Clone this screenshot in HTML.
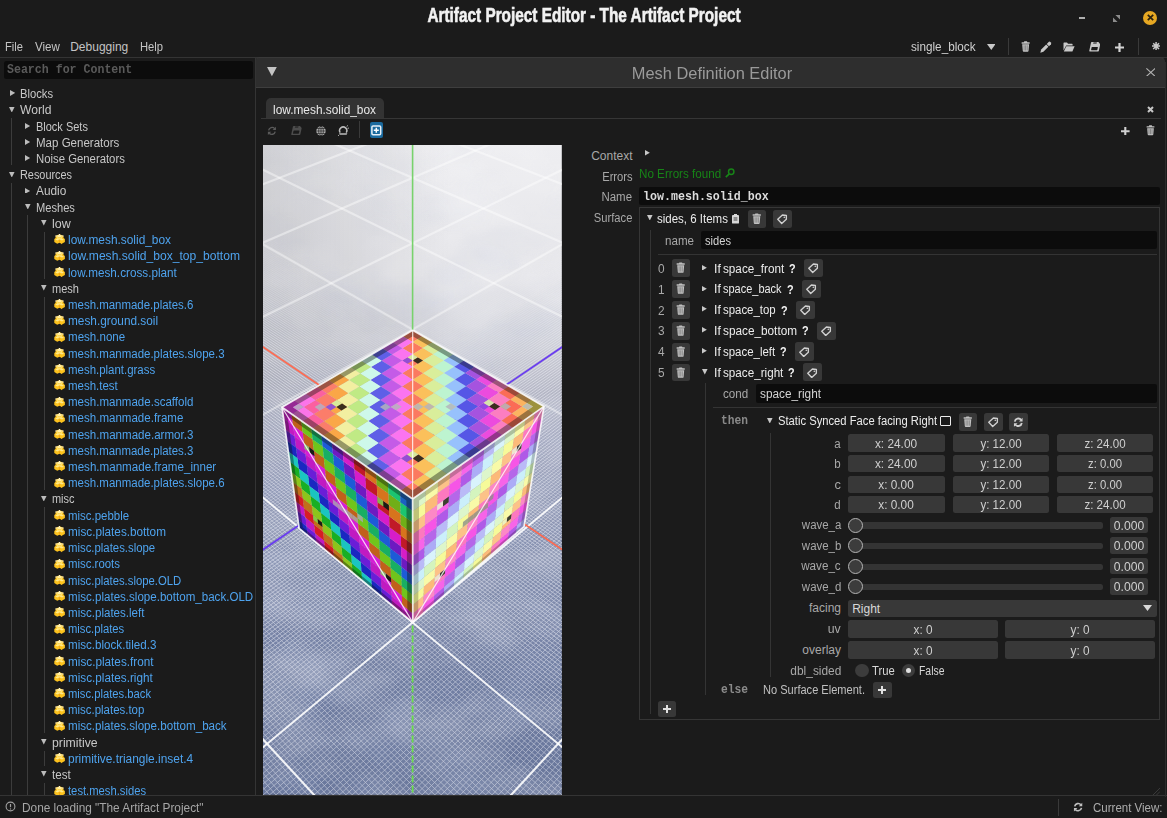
<!DOCTYPE html>
<html><head><meta charset="utf-8"><title>Artifact Project Editor</title>
<style>
html,body{margin:0;padding:0;background:#1b1b1b;}
#app{position:relative;width:1167px;height:818px;overflow:hidden;background:#1b1b1b;font-family:'Liberation Sans', sans-serif;}
#app div,#app svg,#app .t{position:absolute;}
#app div{box-sizing:border-box;}
.t{white-space:nowrap;}
#app .t span{position:static;}
</style></head><body>
<div id="app">
<div style="left:1079.2px;top:16.8px;width:6.0px;height:2.0px;background:#b0b0b0;"></div>
<svg style="left:1112.6px;top:14.8px;" width="7" height="7" viewBox="0 0 7 7"><path d="M2.4 0H7V4.6Z M0 2.4V7H4.6Z" fill="#8c8c8c"/></svg>
<div style="left:1142.8px;top:10.6px;width:14.4px;height:14.4px;background:#e6a823;border-radius:50%;"></div>
<svg style="left:1146.5px;top:14.3px;" width="7" height="7" viewBox="0 0 7 7"><path d="M0.8 0.8L6.2 6.2M6.2 0.8L0.8 6.2" stroke="#2a2110" stroke-width="1.7" fill="none"/></svg>
<svg style="left:986.8px;top:43.9px;" width="8.6" height="6" viewBox="0 0 8.6 6"><path d="M0 0H8.6L4.3 6Z" fill="#c8c8c8"/></svg>
<div style="left:1008.2px;top:38.0px;width:1.0px;height:16.5px;background:#3a3a3a;"></div>
<svg style="left:1020.8px;top:40.9px;" width="9.3" height="11.16" viewBox="0 0 10 12"><path d="M3.6 0.4h2.8l0.5 1H9.3v1.5H0.7V1.4H3.1z M1.3 3.5h7.4l-0.6 7.1q-0.1 0.9-1 0.9H2.9q-0.9 0-1-0.9z" fill="#c4c4c4"/><path d="M3.3 4.6v5.6M5 4.6v5.6M6.7 4.6v5.6" stroke="#1b1b1b" stroke-width="0.6" stroke-opacity="0.65" fill="none"/></svg>
<svg style="left:1040.0px;top:40.8px;" width="12" height="12" viewBox="0 0 12 12"><path d="M0.3 11.7L1.2 8.6L6.2 3.6L8.4 5.8L3.4 10.8Z" fill="#c8c8c8"/><path d="M6.8 3L8.6 0.9Q9.6 0.2 10.6 1.2T11 3.3L9 5.2Z" fill="#c8c8c8"/></svg>
<svg style="left:1063.0px;top:41.9px;" width="12" height="10" viewBox="0 0 12 10"><path d="M0.5 1.2q0-.6.6-.6H4l1 1.2H9q.6 0 .6.6V3.4H3.2L0.5 8.6Z" fill="#c8c8c8"/><path d="M3.3 4.3H11.6L9.4 9.4H0.8Z" fill="#c8c8c8"/></svg>
<svg style="left:1088.9px;top:41.3px;" width="11.399999999999999" height="11.399999999999999" viewBox="0 0 12 12"><g transform="skewX(-12) translate(1.6 0)"><path d="M1.5 1H8.6L11 3.4V10.4q0 .6-.6.6H1.5q-.6 0-.6-.6V1.6q0-.6.6-.6Z" fill="#c8c8c8"/><rect x="3.4" y="1" width="3.6" height="2.2" fill="#1b1b1b" fill-opacity="0.55"/><rect x="2.6" y="6.2" width="6.6" height="3.6" rx="0.5" fill="#1b1b1b"/></g></svg>
<svg style="left:1115.1px;top:42.8px;" width="9" height="9" viewBox="0 0 9 9"><path d="M4.5 0V9M0 4.5H9" stroke="#d4d4d4" stroke-width="2.2" fill="none"/></svg>
<div style="left:1138.0px;top:38.0px;width:1.0px;height:16.5px;background:#3a3a3a;"></div>
<svg style="left:1151.6px;top:42.0px;" width="8.2" height="8.2" viewBox="0 0 8.2 8.2"><path d="M4.1 0V8.2M0 4.1H8.2M1.2 1.2L7 7M7 1.2L1.2 7" stroke="#c8c8c8" stroke-width="1.5" fill="none"/></svg>
<div style="left:0.0px;top:57.3px;width:1167.0px;height:1.0px;background:#343434;"></div>
<div style="left:4.1px;top:61.0px;width:248.5px;height:17.5px;background:#0c0c0c;border-radius:2.5px;"></div>
<div style="left:255.0px;top:57.4px;width:1.3px;height:738.0px;background:#343434;"></div>
<svg style="left:9.6px;top:90.3px;" width="5.13" height="5.89" viewBox="0 0 5.13 5.89"><path d="M0 0L5.13 2.945L0 5.89Z" fill="#bcbcbc"/></svg>
<svg style="left:9.4px;top:106.6px;" width="5.58" height="5.58" viewBox="0 0 5.58 5.58"><path d="M0 0L5.58 0L2.79 5.58Z" fill="#bcbcbc"/></svg>
<svg style="left:25.4px;top:122.7px;" width="5.13" height="5.89" viewBox="0 0 5.13 5.89"><path d="M0 0L5.13 2.945L0 5.89Z" fill="#bcbcbc"/></svg>
<svg style="left:25.4px;top:138.9px;" width="5.13" height="5.89" viewBox="0 0 5.13 5.89"><path d="M0 0L5.13 2.945L0 5.89Z" fill="#bcbcbc"/></svg>
<svg style="left:25.4px;top:155.1px;" width="5.13" height="5.89" viewBox="0 0 5.13 5.89"><path d="M0 0L5.13 2.945L0 5.89Z" fill="#bcbcbc"/></svg>
<svg style="left:9.4px;top:171.5px;" width="5.58" height="5.58" viewBox="0 0 5.58 5.58"><path d="M0 0L5.58 0L2.79 5.58Z" fill="#bcbcbc"/></svg>
<svg style="left:25.4px;top:187.5px;" width="5.13" height="5.89" viewBox="0 0 5.13 5.89"><path d="M0 0L5.13 2.945L0 5.89Z" fill="#bcbcbc"/></svg>
<svg style="left:25.2px;top:203.9px;" width="5.58" height="5.58" viewBox="0 0 5.58 5.58"><path d="M0 0L5.58 0L2.79 5.58Z" fill="#bcbcbc"/></svg>
<svg style="left:41.1px;top:220.1px;" width="5.58" height="5.58" viewBox="0 0 5.58 5.58"><path d="M0 0L5.58 0L2.79 5.58Z" fill="#bcbcbc"/></svg>
<svg style="left:53.8px;top:234.3px;" width="11.2" height="10.4" viewBox="0 0 11.2 10.4"><path d="M5.5 0.2L9.4 1.7L9.6 3.9L10.9 4.9V8L8.2 9.6L7.6 10.2L7 9.4L5.5 8.7L3.2 9.7L0.3 8.1V4.9L1.5 3.9L1.6 1.7Z" fill="#fcc21e"/><path d="M5.5 0.5L9 1.9L5.5 3.6L2 1.9Z" fill="#fff0a8"/><path d="M2.6 2.6L5.5 4V6.2L3 5.2Z M8.4 2.6L5.5 4V6.2L8 5.2Z" fill="#ffe270"/><path d="M1.2 5.3L3.2 4.7L5.2 5.6L3.2 6.6Z M5.9 5.6L8 4.7L10 5.4L8 6.6Z" fill="#ffe88c"/><circle cx="2" cy="1.9" r="0.55" fill="#fff"/><circle cx="9" cy="1.9" r="0.55" fill="#fff"/><circle cx="5.5" cy="0.6" r="0.5" fill="#fff"/><path d="M5.5 5.6V8.6" stroke="#f09a10" stroke-width="0.7"/></svg>
<svg style="left:53.8px;top:250.5px;" width="11.2" height="10.4" viewBox="0 0 11.2 10.4"><path d="M5.5 0.2L9.4 1.7L9.6 3.9L10.9 4.9V8L8.2 9.6L7.6 10.2L7 9.4L5.5 8.7L3.2 9.7L0.3 8.1V4.9L1.5 3.9L1.6 1.7Z" fill="#fcc21e"/><path d="M5.5 0.5L9 1.9L5.5 3.6L2 1.9Z" fill="#fff0a8"/><path d="M2.6 2.6L5.5 4V6.2L3 5.2Z M8.4 2.6L5.5 4V6.2L8 5.2Z" fill="#ffe270"/><path d="M1.2 5.3L3.2 4.7L5.2 5.6L3.2 6.6Z M5.9 5.6L8 4.7L10 5.4L8 6.6Z" fill="#ffe88c"/><circle cx="2" cy="1.9" r="0.55" fill="#fff"/><circle cx="9" cy="1.9" r="0.55" fill="#fff"/><circle cx="5.5" cy="0.6" r="0.5" fill="#fff"/><path d="M5.5 5.6V8.6" stroke="#f09a10" stroke-width="0.7"/></svg>
<svg style="left:53.8px;top:266.8px;" width="11.2" height="10.4" viewBox="0 0 11.2 10.4"><path d="M5.5 0.2L9.4 1.7L9.6 3.9L10.9 4.9V8L8.2 9.6L7.6 10.2L7 9.4L5.5 8.7L3.2 9.7L0.3 8.1V4.9L1.5 3.9L1.6 1.7Z" fill="#fcc21e"/><path d="M5.5 0.5L9 1.9L5.5 3.6L2 1.9Z" fill="#fff0a8"/><path d="M2.6 2.6L5.5 4V6.2L3 5.2Z M8.4 2.6L5.5 4V6.2L8 5.2Z" fill="#ffe270"/><path d="M1.2 5.3L3.2 4.7L5.2 5.6L3.2 6.6Z M5.9 5.6L8 4.7L10 5.4L8 6.6Z" fill="#ffe88c"/><circle cx="2" cy="1.9" r="0.55" fill="#fff"/><circle cx="9" cy="1.9" r="0.55" fill="#fff"/><circle cx="5.5" cy="0.6" r="0.5" fill="#fff"/><path d="M5.5 5.6V8.6" stroke="#f09a10" stroke-width="0.7"/></svg>
<svg style="left:41.1px;top:285.0px;" width="5.58" height="5.58" viewBox="0 0 5.58 5.58"><path d="M0 0L5.58 0L2.79 5.58Z" fill="#bcbcbc"/></svg>
<svg style="left:53.8px;top:299.2px;" width="11.2" height="10.4" viewBox="0 0 11.2 10.4"><path d="M5.5 0.2L9.4 1.7L9.6 3.9L10.9 4.9V8L8.2 9.6L7.6 10.2L7 9.4L5.5 8.7L3.2 9.7L0.3 8.1V4.9L1.5 3.9L1.6 1.7Z" fill="#fcc21e"/><path d="M5.5 0.5L9 1.9L5.5 3.6L2 1.9Z" fill="#fff0a8"/><path d="M2.6 2.6L5.5 4V6.2L3 5.2Z M8.4 2.6L5.5 4V6.2L8 5.2Z" fill="#ffe270"/><path d="M1.2 5.3L3.2 4.7L5.2 5.6L3.2 6.6Z M5.9 5.6L8 4.7L10 5.4L8 6.6Z" fill="#ffe88c"/><circle cx="2" cy="1.9" r="0.55" fill="#fff"/><circle cx="9" cy="1.9" r="0.55" fill="#fff"/><circle cx="5.5" cy="0.6" r="0.5" fill="#fff"/><path d="M5.5 5.6V8.6" stroke="#f09a10" stroke-width="0.7"/></svg>
<svg style="left:53.8px;top:315.4px;" width="11.2" height="10.4" viewBox="0 0 11.2 10.4"><path d="M5.5 0.2L9.4 1.7L9.6 3.9L10.9 4.9V8L8.2 9.6L7.6 10.2L7 9.4L5.5 8.7L3.2 9.7L0.3 8.1V4.9L1.5 3.9L1.6 1.7Z" fill="#fcc21e"/><path d="M5.5 0.5L9 1.9L5.5 3.6L2 1.9Z" fill="#fff0a8"/><path d="M2.6 2.6L5.5 4V6.2L3 5.2Z M8.4 2.6L5.5 4V6.2L8 5.2Z" fill="#ffe270"/><path d="M1.2 5.3L3.2 4.7L5.2 5.6L3.2 6.6Z M5.9 5.6L8 4.7L10 5.4L8 6.6Z" fill="#ffe88c"/><circle cx="2" cy="1.9" r="0.55" fill="#fff"/><circle cx="9" cy="1.9" r="0.55" fill="#fff"/><circle cx="5.5" cy="0.6" r="0.5" fill="#fff"/><path d="M5.5 5.6V8.6" stroke="#f09a10" stroke-width="0.7"/></svg>
<svg style="left:53.8px;top:331.6px;" width="11.2" height="10.4" viewBox="0 0 11.2 10.4"><path d="M5.5 0.2L9.4 1.7L9.6 3.9L10.9 4.9V8L8.2 9.6L7.6 10.2L7 9.4L5.5 8.7L3.2 9.7L0.3 8.1V4.9L1.5 3.9L1.6 1.7Z" fill="#fcc21e"/><path d="M5.5 0.5L9 1.9L5.5 3.6L2 1.9Z" fill="#fff0a8"/><path d="M2.6 2.6L5.5 4V6.2L3 5.2Z M8.4 2.6L5.5 4V6.2L8 5.2Z" fill="#ffe270"/><path d="M1.2 5.3L3.2 4.7L5.2 5.6L3.2 6.6Z M5.9 5.6L8 4.7L10 5.4L8 6.6Z" fill="#ffe88c"/><circle cx="2" cy="1.9" r="0.55" fill="#fff"/><circle cx="9" cy="1.9" r="0.55" fill="#fff"/><circle cx="5.5" cy="0.6" r="0.5" fill="#fff"/><path d="M5.5 5.6V8.6" stroke="#f09a10" stroke-width="0.7"/></svg>
<svg style="left:53.8px;top:347.8px;" width="11.2" height="10.4" viewBox="0 0 11.2 10.4"><path d="M5.5 0.2L9.4 1.7L9.6 3.9L10.9 4.9V8L8.2 9.6L7.6 10.2L7 9.4L5.5 8.7L3.2 9.7L0.3 8.1V4.9L1.5 3.9L1.6 1.7Z" fill="#fcc21e"/><path d="M5.5 0.5L9 1.9L5.5 3.6L2 1.9Z" fill="#fff0a8"/><path d="M2.6 2.6L5.5 4V6.2L3 5.2Z M8.4 2.6L5.5 4V6.2L8 5.2Z" fill="#ffe270"/><path d="M1.2 5.3L3.2 4.7L5.2 5.6L3.2 6.6Z M5.9 5.6L8 4.7L10 5.4L8 6.6Z" fill="#ffe88c"/><circle cx="2" cy="1.9" r="0.55" fill="#fff"/><circle cx="9" cy="1.9" r="0.55" fill="#fff"/><circle cx="5.5" cy="0.6" r="0.5" fill="#fff"/><path d="M5.5 5.6V8.6" stroke="#f09a10" stroke-width="0.7"/></svg>
<svg style="left:53.8px;top:364.0px;" width="11.2" height="10.4" viewBox="0 0 11.2 10.4"><path d="M5.5 0.2L9.4 1.7L9.6 3.9L10.9 4.9V8L8.2 9.6L7.6 10.2L7 9.4L5.5 8.7L3.2 9.7L0.3 8.1V4.9L1.5 3.9L1.6 1.7Z" fill="#fcc21e"/><path d="M5.5 0.5L9 1.9L5.5 3.6L2 1.9Z" fill="#fff0a8"/><path d="M2.6 2.6L5.5 4V6.2L3 5.2Z M8.4 2.6L5.5 4V6.2L8 5.2Z" fill="#ffe270"/><path d="M1.2 5.3L3.2 4.7L5.2 5.6L3.2 6.6Z M5.9 5.6L8 4.7L10 5.4L8 6.6Z" fill="#ffe88c"/><circle cx="2" cy="1.9" r="0.55" fill="#fff"/><circle cx="9" cy="1.9" r="0.55" fill="#fff"/><circle cx="5.5" cy="0.6" r="0.5" fill="#fff"/><path d="M5.5 5.6V8.6" stroke="#f09a10" stroke-width="0.7"/></svg>
<svg style="left:53.8px;top:380.3px;" width="11.2" height="10.4" viewBox="0 0 11.2 10.4"><path d="M5.5 0.2L9.4 1.7L9.6 3.9L10.9 4.9V8L8.2 9.6L7.6 10.2L7 9.4L5.5 8.7L3.2 9.7L0.3 8.1V4.9L1.5 3.9L1.6 1.7Z" fill="#fcc21e"/><path d="M5.5 0.5L9 1.9L5.5 3.6L2 1.9Z" fill="#fff0a8"/><path d="M2.6 2.6L5.5 4V6.2L3 5.2Z M8.4 2.6L5.5 4V6.2L8 5.2Z" fill="#ffe270"/><path d="M1.2 5.3L3.2 4.7L5.2 5.6L3.2 6.6Z M5.9 5.6L8 4.7L10 5.4L8 6.6Z" fill="#ffe88c"/><circle cx="2" cy="1.9" r="0.55" fill="#fff"/><circle cx="9" cy="1.9" r="0.55" fill="#fff"/><circle cx="5.5" cy="0.6" r="0.5" fill="#fff"/><path d="M5.5 5.6V8.6" stroke="#f09a10" stroke-width="0.7"/></svg>
<svg style="left:53.8px;top:396.5px;" width="11.2" height="10.4" viewBox="0 0 11.2 10.4"><path d="M5.5 0.2L9.4 1.7L9.6 3.9L10.9 4.9V8L8.2 9.6L7.6 10.2L7 9.4L5.5 8.7L3.2 9.7L0.3 8.1V4.9L1.5 3.9L1.6 1.7Z" fill="#fcc21e"/><path d="M5.5 0.5L9 1.9L5.5 3.6L2 1.9Z" fill="#fff0a8"/><path d="M2.6 2.6L5.5 4V6.2L3 5.2Z M8.4 2.6L5.5 4V6.2L8 5.2Z" fill="#ffe270"/><path d="M1.2 5.3L3.2 4.7L5.2 5.6L3.2 6.6Z M5.9 5.6L8 4.7L10 5.4L8 6.6Z" fill="#ffe88c"/><circle cx="2" cy="1.9" r="0.55" fill="#fff"/><circle cx="9" cy="1.9" r="0.55" fill="#fff"/><circle cx="5.5" cy="0.6" r="0.5" fill="#fff"/><path d="M5.5 5.6V8.6" stroke="#f09a10" stroke-width="0.7"/></svg>
<svg style="left:53.8px;top:412.7px;" width="11.2" height="10.4" viewBox="0 0 11.2 10.4"><path d="M5.5 0.2L9.4 1.7L9.6 3.9L10.9 4.9V8L8.2 9.6L7.6 10.2L7 9.4L5.5 8.7L3.2 9.7L0.3 8.1V4.9L1.5 3.9L1.6 1.7Z" fill="#fcc21e"/><path d="M5.5 0.5L9 1.9L5.5 3.6L2 1.9Z" fill="#fff0a8"/><path d="M2.6 2.6L5.5 4V6.2L3 5.2Z M8.4 2.6L5.5 4V6.2L8 5.2Z" fill="#ffe270"/><path d="M1.2 5.3L3.2 4.7L5.2 5.6L3.2 6.6Z M5.9 5.6L8 4.7L10 5.4L8 6.6Z" fill="#ffe88c"/><circle cx="2" cy="1.9" r="0.55" fill="#fff"/><circle cx="9" cy="1.9" r="0.55" fill="#fff"/><circle cx="5.5" cy="0.6" r="0.5" fill="#fff"/><path d="M5.5 5.6V8.6" stroke="#f09a10" stroke-width="0.7"/></svg>
<svg style="left:53.8px;top:428.9px;" width="11.2" height="10.4" viewBox="0 0 11.2 10.4"><path d="M5.5 0.2L9.4 1.7L9.6 3.9L10.9 4.9V8L8.2 9.6L7.6 10.2L7 9.4L5.5 8.7L3.2 9.7L0.3 8.1V4.9L1.5 3.9L1.6 1.7Z" fill="#fcc21e"/><path d="M5.5 0.5L9 1.9L5.5 3.6L2 1.9Z" fill="#fff0a8"/><path d="M2.6 2.6L5.5 4V6.2L3 5.2Z M8.4 2.6L5.5 4V6.2L8 5.2Z" fill="#ffe270"/><path d="M1.2 5.3L3.2 4.7L5.2 5.6L3.2 6.6Z M5.9 5.6L8 4.7L10 5.4L8 6.6Z" fill="#ffe88c"/><circle cx="2" cy="1.9" r="0.55" fill="#fff"/><circle cx="9" cy="1.9" r="0.55" fill="#fff"/><circle cx="5.5" cy="0.6" r="0.5" fill="#fff"/><path d="M5.5 5.6V8.6" stroke="#f09a10" stroke-width="0.7"/></svg>
<svg style="left:53.8px;top:445.1px;" width="11.2" height="10.4" viewBox="0 0 11.2 10.4"><path d="M5.5 0.2L9.4 1.7L9.6 3.9L10.9 4.9V8L8.2 9.6L7.6 10.2L7 9.4L5.5 8.7L3.2 9.7L0.3 8.1V4.9L1.5 3.9L1.6 1.7Z" fill="#fcc21e"/><path d="M5.5 0.5L9 1.9L5.5 3.6L2 1.9Z" fill="#fff0a8"/><path d="M2.6 2.6L5.5 4V6.2L3 5.2Z M8.4 2.6L5.5 4V6.2L8 5.2Z" fill="#ffe270"/><path d="M1.2 5.3L3.2 4.7L5.2 5.6L3.2 6.6Z M5.9 5.6L8 4.7L10 5.4L8 6.6Z" fill="#ffe88c"/><circle cx="2" cy="1.9" r="0.55" fill="#fff"/><circle cx="9" cy="1.9" r="0.55" fill="#fff"/><circle cx="5.5" cy="0.6" r="0.5" fill="#fff"/><path d="M5.5 5.6V8.6" stroke="#f09a10" stroke-width="0.7"/></svg>
<svg style="left:53.8px;top:461.3px;" width="11.2" height="10.4" viewBox="0 0 11.2 10.4"><path d="M5.5 0.2L9.4 1.7L9.6 3.9L10.9 4.9V8L8.2 9.6L7.6 10.2L7 9.4L5.5 8.7L3.2 9.7L0.3 8.1V4.9L1.5 3.9L1.6 1.7Z" fill="#fcc21e"/><path d="M5.5 0.5L9 1.9L5.5 3.6L2 1.9Z" fill="#fff0a8"/><path d="M2.6 2.6L5.5 4V6.2L3 5.2Z M8.4 2.6L5.5 4V6.2L8 5.2Z" fill="#ffe270"/><path d="M1.2 5.3L3.2 4.7L5.2 5.6L3.2 6.6Z M5.9 5.6L8 4.7L10 5.4L8 6.6Z" fill="#ffe88c"/><circle cx="2" cy="1.9" r="0.55" fill="#fff"/><circle cx="9" cy="1.9" r="0.55" fill="#fff"/><circle cx="5.5" cy="0.6" r="0.5" fill="#fff"/><path d="M5.5 5.6V8.6" stroke="#f09a10" stroke-width="0.7"/></svg>
<svg style="left:53.8px;top:477.5px;" width="11.2" height="10.4" viewBox="0 0 11.2 10.4"><path d="M5.5 0.2L9.4 1.7L9.6 3.9L10.9 4.9V8L8.2 9.6L7.6 10.2L7 9.4L5.5 8.7L3.2 9.7L0.3 8.1V4.9L1.5 3.9L1.6 1.7Z" fill="#fcc21e"/><path d="M5.5 0.5L9 1.9L5.5 3.6L2 1.9Z" fill="#fff0a8"/><path d="M2.6 2.6L5.5 4V6.2L3 5.2Z M8.4 2.6L5.5 4V6.2L8 5.2Z" fill="#ffe270"/><path d="M1.2 5.3L3.2 4.7L5.2 5.6L3.2 6.6Z M5.9 5.6L8 4.7L10 5.4L8 6.6Z" fill="#ffe88c"/><circle cx="2" cy="1.9" r="0.55" fill="#fff"/><circle cx="9" cy="1.9" r="0.55" fill="#fff"/><circle cx="5.5" cy="0.6" r="0.5" fill="#fff"/><path d="M5.5 5.6V8.6" stroke="#f09a10" stroke-width="0.7"/></svg>
<svg style="left:41.1px;top:495.8px;" width="5.58" height="5.58" viewBox="0 0 5.58 5.58"><path d="M0 0L5.58 0L2.79 5.58Z" fill="#bcbcbc"/></svg>
<svg style="left:53.8px;top:510.0px;" width="11.2" height="10.4" viewBox="0 0 11.2 10.4"><path d="M5.5 0.2L9.4 1.7L9.6 3.9L10.9 4.9V8L8.2 9.6L7.6 10.2L7 9.4L5.5 8.7L3.2 9.7L0.3 8.1V4.9L1.5 3.9L1.6 1.7Z" fill="#fcc21e"/><path d="M5.5 0.5L9 1.9L5.5 3.6L2 1.9Z" fill="#fff0a8"/><path d="M2.6 2.6L5.5 4V6.2L3 5.2Z M8.4 2.6L5.5 4V6.2L8 5.2Z" fill="#ffe270"/><path d="M1.2 5.3L3.2 4.7L5.2 5.6L3.2 6.6Z M5.9 5.6L8 4.7L10 5.4L8 6.6Z" fill="#ffe88c"/><circle cx="2" cy="1.9" r="0.55" fill="#fff"/><circle cx="9" cy="1.9" r="0.55" fill="#fff"/><circle cx="5.5" cy="0.6" r="0.5" fill="#fff"/><path d="M5.5 5.6V8.6" stroke="#f09a10" stroke-width="0.7"/></svg>
<svg style="left:53.8px;top:526.2px;" width="11.2" height="10.4" viewBox="0 0 11.2 10.4"><path d="M5.5 0.2L9.4 1.7L9.6 3.9L10.9 4.9V8L8.2 9.6L7.6 10.2L7 9.4L5.5 8.7L3.2 9.7L0.3 8.1V4.9L1.5 3.9L1.6 1.7Z" fill="#fcc21e"/><path d="M5.5 0.5L9 1.9L5.5 3.6L2 1.9Z" fill="#fff0a8"/><path d="M2.6 2.6L5.5 4V6.2L3 5.2Z M8.4 2.6L5.5 4V6.2L8 5.2Z" fill="#ffe270"/><path d="M1.2 5.3L3.2 4.7L5.2 5.6L3.2 6.6Z M5.9 5.6L8 4.7L10 5.4L8 6.6Z" fill="#ffe88c"/><circle cx="2" cy="1.9" r="0.55" fill="#fff"/><circle cx="9" cy="1.9" r="0.55" fill="#fff"/><circle cx="5.5" cy="0.6" r="0.5" fill="#fff"/><path d="M5.5 5.6V8.6" stroke="#f09a10" stroke-width="0.7"/></svg>
<svg style="left:53.8px;top:542.4px;" width="11.2" height="10.4" viewBox="0 0 11.2 10.4"><path d="M5.5 0.2L9.4 1.7L9.6 3.9L10.9 4.9V8L8.2 9.6L7.6 10.2L7 9.4L5.5 8.7L3.2 9.7L0.3 8.1V4.9L1.5 3.9L1.6 1.7Z" fill="#fcc21e"/><path d="M5.5 0.5L9 1.9L5.5 3.6L2 1.9Z" fill="#fff0a8"/><path d="M2.6 2.6L5.5 4V6.2L3 5.2Z M8.4 2.6L5.5 4V6.2L8 5.2Z" fill="#ffe270"/><path d="M1.2 5.3L3.2 4.7L5.2 5.6L3.2 6.6Z M5.9 5.6L8 4.7L10 5.4L8 6.6Z" fill="#ffe88c"/><circle cx="2" cy="1.9" r="0.55" fill="#fff"/><circle cx="9" cy="1.9" r="0.55" fill="#fff"/><circle cx="5.5" cy="0.6" r="0.5" fill="#fff"/><path d="M5.5 5.6V8.6" stroke="#f09a10" stroke-width="0.7"/></svg>
<svg style="left:53.8px;top:558.6px;" width="11.2" height="10.4" viewBox="0 0 11.2 10.4"><path d="M5.5 0.2L9.4 1.7L9.6 3.9L10.9 4.9V8L8.2 9.6L7.6 10.2L7 9.4L5.5 8.7L3.2 9.7L0.3 8.1V4.9L1.5 3.9L1.6 1.7Z" fill="#fcc21e"/><path d="M5.5 0.5L9 1.9L5.5 3.6L2 1.9Z" fill="#fff0a8"/><path d="M2.6 2.6L5.5 4V6.2L3 5.2Z M8.4 2.6L5.5 4V6.2L8 5.2Z" fill="#ffe270"/><path d="M1.2 5.3L3.2 4.7L5.2 5.6L3.2 6.6Z M5.9 5.6L8 4.7L10 5.4L8 6.6Z" fill="#ffe88c"/><circle cx="2" cy="1.9" r="0.55" fill="#fff"/><circle cx="9" cy="1.9" r="0.55" fill="#fff"/><circle cx="5.5" cy="0.6" r="0.5" fill="#fff"/><path d="M5.5 5.6V8.6" stroke="#f09a10" stroke-width="0.7"/></svg>
<svg style="left:53.8px;top:574.8px;" width="11.2" height="10.4" viewBox="0 0 11.2 10.4"><path d="M5.5 0.2L9.4 1.7L9.6 3.9L10.9 4.9V8L8.2 9.6L7.6 10.2L7 9.4L5.5 8.7L3.2 9.7L0.3 8.1V4.9L1.5 3.9L1.6 1.7Z" fill="#fcc21e"/><path d="M5.5 0.5L9 1.9L5.5 3.6L2 1.9Z" fill="#fff0a8"/><path d="M2.6 2.6L5.5 4V6.2L3 5.2Z M8.4 2.6L5.5 4V6.2L8 5.2Z" fill="#ffe270"/><path d="M1.2 5.3L3.2 4.7L5.2 5.6L3.2 6.6Z M5.9 5.6L8 4.7L10 5.4L8 6.6Z" fill="#ffe88c"/><circle cx="2" cy="1.9" r="0.55" fill="#fff"/><circle cx="9" cy="1.9" r="0.55" fill="#fff"/><circle cx="5.5" cy="0.6" r="0.5" fill="#fff"/><path d="M5.5 5.6V8.6" stroke="#f09a10" stroke-width="0.7"/></svg>
<svg style="left:53.8px;top:591.0px;" width="11.2" height="10.4" viewBox="0 0 11.2 10.4"><path d="M5.5 0.2L9.4 1.7L9.6 3.9L10.9 4.9V8L8.2 9.6L7.6 10.2L7 9.4L5.5 8.7L3.2 9.7L0.3 8.1V4.9L1.5 3.9L1.6 1.7Z" fill="#fcc21e"/><path d="M5.5 0.5L9 1.9L5.5 3.6L2 1.9Z" fill="#fff0a8"/><path d="M2.6 2.6L5.5 4V6.2L3 5.2Z M8.4 2.6L5.5 4V6.2L8 5.2Z" fill="#ffe270"/><path d="M1.2 5.3L3.2 4.7L5.2 5.6L3.2 6.6Z M5.9 5.6L8 4.7L10 5.4L8 6.6Z" fill="#ffe88c"/><circle cx="2" cy="1.9" r="0.55" fill="#fff"/><circle cx="9" cy="1.9" r="0.55" fill="#fff"/><circle cx="5.5" cy="0.6" r="0.5" fill="#fff"/><path d="M5.5 5.6V8.6" stroke="#f09a10" stroke-width="0.7"/></svg>
<svg style="left:53.8px;top:607.2px;" width="11.2" height="10.4" viewBox="0 0 11.2 10.4"><path d="M5.5 0.2L9.4 1.7L9.6 3.9L10.9 4.9V8L8.2 9.6L7.6 10.2L7 9.4L5.5 8.7L3.2 9.7L0.3 8.1V4.9L1.5 3.9L1.6 1.7Z" fill="#fcc21e"/><path d="M5.5 0.5L9 1.9L5.5 3.6L2 1.9Z" fill="#fff0a8"/><path d="M2.6 2.6L5.5 4V6.2L3 5.2Z M8.4 2.6L5.5 4V6.2L8 5.2Z" fill="#ffe270"/><path d="M1.2 5.3L3.2 4.7L5.2 5.6L3.2 6.6Z M5.9 5.6L8 4.7L10 5.4L8 6.6Z" fill="#ffe88c"/><circle cx="2" cy="1.9" r="0.55" fill="#fff"/><circle cx="9" cy="1.9" r="0.55" fill="#fff"/><circle cx="5.5" cy="0.6" r="0.5" fill="#fff"/><path d="M5.5 5.6V8.6" stroke="#f09a10" stroke-width="0.7"/></svg>
<svg style="left:53.8px;top:623.5px;" width="11.2" height="10.4" viewBox="0 0 11.2 10.4"><path d="M5.5 0.2L9.4 1.7L9.6 3.9L10.9 4.9V8L8.2 9.6L7.6 10.2L7 9.4L5.5 8.7L3.2 9.7L0.3 8.1V4.9L1.5 3.9L1.6 1.7Z" fill="#fcc21e"/><path d="M5.5 0.5L9 1.9L5.5 3.6L2 1.9Z" fill="#fff0a8"/><path d="M2.6 2.6L5.5 4V6.2L3 5.2Z M8.4 2.6L5.5 4V6.2L8 5.2Z" fill="#ffe270"/><path d="M1.2 5.3L3.2 4.7L5.2 5.6L3.2 6.6Z M5.9 5.6L8 4.7L10 5.4L8 6.6Z" fill="#ffe88c"/><circle cx="2" cy="1.9" r="0.55" fill="#fff"/><circle cx="9" cy="1.9" r="0.55" fill="#fff"/><circle cx="5.5" cy="0.6" r="0.5" fill="#fff"/><path d="M5.5 5.6V8.6" stroke="#f09a10" stroke-width="0.7"/></svg>
<svg style="left:53.8px;top:639.7px;" width="11.2" height="10.4" viewBox="0 0 11.2 10.4"><path d="M5.5 0.2L9.4 1.7L9.6 3.9L10.9 4.9V8L8.2 9.6L7.6 10.2L7 9.4L5.5 8.7L3.2 9.7L0.3 8.1V4.9L1.5 3.9L1.6 1.7Z" fill="#fcc21e"/><path d="M5.5 0.5L9 1.9L5.5 3.6L2 1.9Z" fill="#fff0a8"/><path d="M2.6 2.6L5.5 4V6.2L3 5.2Z M8.4 2.6L5.5 4V6.2L8 5.2Z" fill="#ffe270"/><path d="M1.2 5.3L3.2 4.7L5.2 5.6L3.2 6.6Z M5.9 5.6L8 4.7L10 5.4L8 6.6Z" fill="#ffe88c"/><circle cx="2" cy="1.9" r="0.55" fill="#fff"/><circle cx="9" cy="1.9" r="0.55" fill="#fff"/><circle cx="5.5" cy="0.6" r="0.5" fill="#fff"/><path d="M5.5 5.6V8.6" stroke="#f09a10" stroke-width="0.7"/></svg>
<svg style="left:53.8px;top:655.9px;" width="11.2" height="10.4" viewBox="0 0 11.2 10.4"><path d="M5.5 0.2L9.4 1.7L9.6 3.9L10.9 4.9V8L8.2 9.6L7.6 10.2L7 9.4L5.5 8.7L3.2 9.7L0.3 8.1V4.9L1.5 3.9L1.6 1.7Z" fill="#fcc21e"/><path d="M5.5 0.5L9 1.9L5.5 3.6L2 1.9Z" fill="#fff0a8"/><path d="M2.6 2.6L5.5 4V6.2L3 5.2Z M8.4 2.6L5.5 4V6.2L8 5.2Z" fill="#ffe270"/><path d="M1.2 5.3L3.2 4.7L5.2 5.6L3.2 6.6Z M5.9 5.6L8 4.7L10 5.4L8 6.6Z" fill="#ffe88c"/><circle cx="2" cy="1.9" r="0.55" fill="#fff"/><circle cx="9" cy="1.9" r="0.55" fill="#fff"/><circle cx="5.5" cy="0.6" r="0.5" fill="#fff"/><path d="M5.5 5.6V8.6" stroke="#f09a10" stroke-width="0.7"/></svg>
<svg style="left:53.8px;top:672.1px;" width="11.2" height="10.4" viewBox="0 0 11.2 10.4"><path d="M5.5 0.2L9.4 1.7L9.6 3.9L10.9 4.9V8L8.2 9.6L7.6 10.2L7 9.4L5.5 8.7L3.2 9.7L0.3 8.1V4.9L1.5 3.9L1.6 1.7Z" fill="#fcc21e"/><path d="M5.5 0.5L9 1.9L5.5 3.6L2 1.9Z" fill="#fff0a8"/><path d="M2.6 2.6L5.5 4V6.2L3 5.2Z M8.4 2.6L5.5 4V6.2L8 5.2Z" fill="#ffe270"/><path d="M1.2 5.3L3.2 4.7L5.2 5.6L3.2 6.6Z M5.9 5.6L8 4.7L10 5.4L8 6.6Z" fill="#ffe88c"/><circle cx="2" cy="1.9" r="0.55" fill="#fff"/><circle cx="9" cy="1.9" r="0.55" fill="#fff"/><circle cx="5.5" cy="0.6" r="0.5" fill="#fff"/><path d="M5.5 5.6V8.6" stroke="#f09a10" stroke-width="0.7"/></svg>
<svg style="left:53.8px;top:688.3px;" width="11.2" height="10.4" viewBox="0 0 11.2 10.4"><path d="M5.5 0.2L9.4 1.7L9.6 3.9L10.9 4.9V8L8.2 9.6L7.6 10.2L7 9.4L5.5 8.7L3.2 9.7L0.3 8.1V4.9L1.5 3.9L1.6 1.7Z" fill="#fcc21e"/><path d="M5.5 0.5L9 1.9L5.5 3.6L2 1.9Z" fill="#fff0a8"/><path d="M2.6 2.6L5.5 4V6.2L3 5.2Z M8.4 2.6L5.5 4V6.2L8 5.2Z" fill="#ffe270"/><path d="M1.2 5.3L3.2 4.7L5.2 5.6L3.2 6.6Z M5.9 5.6L8 4.7L10 5.4L8 6.6Z" fill="#ffe88c"/><circle cx="2" cy="1.9" r="0.55" fill="#fff"/><circle cx="9" cy="1.9" r="0.55" fill="#fff"/><circle cx="5.5" cy="0.6" r="0.5" fill="#fff"/><path d="M5.5 5.6V8.6" stroke="#f09a10" stroke-width="0.7"/></svg>
<svg style="left:53.8px;top:704.5px;" width="11.2" height="10.4" viewBox="0 0 11.2 10.4"><path d="M5.5 0.2L9.4 1.7L9.6 3.9L10.9 4.9V8L8.2 9.6L7.6 10.2L7 9.4L5.5 8.7L3.2 9.7L0.3 8.1V4.9L1.5 3.9L1.6 1.7Z" fill="#fcc21e"/><path d="M5.5 0.5L9 1.9L5.5 3.6L2 1.9Z" fill="#fff0a8"/><path d="M2.6 2.6L5.5 4V6.2L3 5.2Z M8.4 2.6L5.5 4V6.2L8 5.2Z" fill="#ffe270"/><path d="M1.2 5.3L3.2 4.7L5.2 5.6L3.2 6.6Z M5.9 5.6L8 4.7L10 5.4L8 6.6Z" fill="#ffe88c"/><circle cx="2" cy="1.9" r="0.55" fill="#fff"/><circle cx="9" cy="1.9" r="0.55" fill="#fff"/><circle cx="5.5" cy="0.6" r="0.5" fill="#fff"/><path d="M5.5 5.6V8.6" stroke="#f09a10" stroke-width="0.7"/></svg>
<svg style="left:53.8px;top:720.7px;" width="11.2" height="10.4" viewBox="0 0 11.2 10.4"><path d="M5.5 0.2L9.4 1.7L9.6 3.9L10.9 4.9V8L8.2 9.6L7.6 10.2L7 9.4L5.5 8.7L3.2 9.7L0.3 8.1V4.9L1.5 3.9L1.6 1.7Z" fill="#fcc21e"/><path d="M5.5 0.5L9 1.9L5.5 3.6L2 1.9Z" fill="#fff0a8"/><path d="M2.6 2.6L5.5 4V6.2L3 5.2Z M8.4 2.6L5.5 4V6.2L8 5.2Z" fill="#ffe270"/><path d="M1.2 5.3L3.2 4.7L5.2 5.6L3.2 6.6Z M5.9 5.6L8 4.7L10 5.4L8 6.6Z" fill="#ffe88c"/><circle cx="2" cy="1.9" r="0.55" fill="#fff"/><circle cx="9" cy="1.9" r="0.55" fill="#fff"/><circle cx="5.5" cy="0.6" r="0.5" fill="#fff"/><path d="M5.5 5.6V8.6" stroke="#f09a10" stroke-width="0.7"/></svg>
<svg style="left:41.1px;top:739.0px;" width="5.58" height="5.58" viewBox="0 0 5.58 5.58"><path d="M0 0L5.58 0L2.79 5.58Z" fill="#bcbcbc"/></svg>
<svg style="left:53.8px;top:753.2px;" width="11.2" height="10.4" viewBox="0 0 11.2 10.4"><path d="M5.5 0.2L9.4 1.7L9.6 3.9L10.9 4.9V8L8.2 9.6L7.6 10.2L7 9.4L5.5 8.7L3.2 9.7L0.3 8.1V4.9L1.5 3.9L1.6 1.7Z" fill="#fcc21e"/><path d="M5.5 0.5L9 1.9L5.5 3.6L2 1.9Z" fill="#fff0a8"/><path d="M2.6 2.6L5.5 4V6.2L3 5.2Z M8.4 2.6L5.5 4V6.2L8 5.2Z" fill="#ffe270"/><path d="M1.2 5.3L3.2 4.7L5.2 5.6L3.2 6.6Z M5.9 5.6L8 4.7L10 5.4L8 6.6Z" fill="#ffe88c"/><circle cx="2" cy="1.9" r="0.55" fill="#fff"/><circle cx="9" cy="1.9" r="0.55" fill="#fff"/><circle cx="5.5" cy="0.6" r="0.5" fill="#fff"/><path d="M5.5 5.6V8.6" stroke="#f09a10" stroke-width="0.7"/></svg>
<svg style="left:41.1px;top:771.4px;" width="5.58" height="5.58" viewBox="0 0 5.58 5.58"><path d="M0 0L5.58 0L2.79 5.58Z" fill="#bcbcbc"/></svg>
<svg style="left:53.8px;top:785.6px;" width="11.2" height="10.4" viewBox="0 0 11.2 10.4"><path d="M5.5 0.2L9.4 1.7L9.6 3.9L10.9 4.9V8L8.2 9.6L7.6 10.2L7 9.4L5.5 8.7L3.2 9.7L0.3 8.1V4.9L1.5 3.9L1.6 1.7Z" fill="#fcc21e"/><path d="M5.5 0.5L9 1.9L5.5 3.6L2 1.9Z" fill="#fff0a8"/><path d="M2.6 2.6L5.5 4V6.2L3 5.2Z M8.4 2.6L5.5 4V6.2L8 5.2Z" fill="#ffe270"/><path d="M1.2 5.3L3.2 4.7L5.2 5.6L3.2 6.6Z M5.9 5.6L8 4.7L10 5.4L8 6.6Z" fill="#ffe88c"/><circle cx="2" cy="1.9" r="0.55" fill="#fff"/><circle cx="9" cy="1.9" r="0.55" fill="#fff"/><circle cx="5.5" cy="0.6" r="0.5" fill="#fff"/><path d="M5.5 5.6V8.6" stroke="#f09a10" stroke-width="0.7"/></svg>
<div style="left:10.9px;top:118.1px;width:1.0px;height:47.4px;background:#3c3c3c;"></div>
<div style="left:10.9px;top:183.0px;width:1.0px;height:631.1px;background:#3c3c3c;"></div>
<div style="left:27.0px;top:215.4px;width:1.0px;height:598.7px;background:#3c3c3c;"></div>
<div style="left:43.9px;top:231.6px;width:1.0px;height:47.4px;background:#3c3c3c;"></div>
<div style="left:43.9px;top:296.5px;width:1.0px;height:193.4px;background:#3c3c3c;"></div>
<div style="left:43.9px;top:507.3px;width:1.0px;height:225.8px;background:#3c3c3c;"></div>
<div style="left:43.9px;top:750.5px;width:1.0px;height:15.0px;background:#3c3c3c;"></div>
<div style="left:43.9px;top:782.9px;width:1.0px;height:15.0px;background:#3c3c3c;"></div>
<div style="left:0.0px;top:795.0px;width:1167.0px;height:23.0px;background:#1b1b1b;"></div>
<div style="left:0.0px;top:795.0px;width:1167.0px;height:1.0px;background:#343434;"></div>
<svg style="left:5.0px;top:801.2px;" width="11" height="11" viewBox="0 0 11 11"><circle cx="5.5" cy="5.5" r="4.4" fill="none" stroke="#a0a0a0" stroke-width="1.1"/><path d="M5.5 3V6.2" stroke="#a0a0a0" stroke-width="1.2"/><circle cx="5.5" cy="7.9" r="0.7" fill="#a0a0a0"/></svg>
<div style="left:1058.2px;top:799.0px;width:1.0px;height:17.0px;background:#3a3a3a;"></div>
<svg style="left:1072.6px;top:801.9px;" width="10.2" height="10.2" viewBox="0 0 12 12"><path d="M2 5.2A4.2 4.2 0 0 1 9.3 3.2" fill="none" stroke="#c0c0c0" stroke-width="1.9"/><path d="M10.9 0.9V5H6.8Z" fill="#c0c0c0"/><path d="M10 6.8A4.2 4.2 0 0 1 2.7 8.8" fill="none" stroke="#c0c0c0" stroke-width="1.9"/><path d="M1.1 11.1V7H5.2Z" fill="#c0c0c0"/></svg>
<div style="left:256.4px;top:57.4px;width:908.6px;height:30.4px;background:#2e2e2e;border-radius:3px 5px 0 0;border-top:1px solid #393939;"></div>
<div style="left:256.4px;top:86.9px;width:908.6px;height:1.0px;background:#3e3e3e;"></div>
<div style="left:1165.2px;top:62.0px;width:1.0px;height:735.0px;background:#2c2c2c;"></div>
<svg style="left:267.3px;top:67.4px;" width="9.8" height="9.2" viewBox="0 0 9.8 9.2"><path d="M0 0H9.8L4.9 9.2Z" fill="#c4c4c4"/></svg>
<svg style="left:1145.8px;top:67.6px;" width="9.6" height="8.8" viewBox="0 0 9.6 8.8"><path d="M0.4 0.4L9.2 8.4M9.2 0.4L0.4 8.4" stroke="#b4b4b4" stroke-width="1.1" fill="none"/></svg>
<div style="left:266.0px;top:98.0px;width:118.0px;height:20.4px;background:#333333;border-radius:5px 5px 0 0;"></div>
<div style="left:260.5px;top:118.0px;width:900.0px;height:1.0px;background:#363636;"></div>
<svg style="left:1147.2px;top:105.6px;" width="7" height="7" viewBox="0 0 7 7"><path d="M1 1L6 6M6 1L1 6" stroke="#c8c8c8" stroke-width="2" fill="none"/></svg>
<svg style="left:266.7px;top:125.7px;" width="9.84" height="9.84" viewBox="0 0 12 12"><path d="M2 5.2A4.2 4.2 0 0 1 9.3 3.2" fill="none" stroke="#5a5a5a" stroke-width="1.7"/><path d="M10.9 0.9V5H6.8Z" fill="#5a5a5a"/><path d="M10 6.8A4.2 4.2 0 0 1 2.7 8.8" fill="none" stroke="#5a5a5a" stroke-width="1.7"/><path d="M1.1 11.1V7H5.2Z" fill="#5a5a5a"/></svg>
<svg style="left:291.4px;top:125.0px;" width="10.8" height="10.8" viewBox="0 0 12 12"><g transform="skewX(-12) translate(1.6 0)"><path d="M1.5 1H8.6L11 3.4V10.4q0 .6-.6.6H1.5q-.6 0-.6-.6V1.6q0-.6.6-.6Z" fill="#4c4c4c"/><rect x="3.4" y="1" width="3.6" height="2.2" fill="#1b1b1b" fill-opacity="0.55"/><rect x="2.6" y="6.2" width="6.6" height="3.6" rx="0.5" fill="#1b1b1b"/></g></svg>
<svg style="left:315.6px;top:125.6px;" width="10" height="10" viewBox="0 0 10 10"><circle cx="5" cy="5" r="4.7" fill="#bcbcbc"/><path d="M5 0.3V9.7M0.3 5H9.7M1 2.6H9M1 7.4H9" stroke="#1b1b1b" stroke-width="0.7" fill="none"/><ellipse cx="5" cy="5" rx="2.3" ry="4.7" fill="none" stroke="#1b1b1b" stroke-width="0.7"/></svg>
<svg style="left:337.6px;top:125.2px;" width="11" height="11" viewBox="0 0 11 11"><path d="M2.2 7.6A3.6 3.6 0 1 1 8.2 7.6" fill="none" stroke="#bcbcbc" stroke-width="1.5"/><path d="M1 8.2H9.4L8.6 9.8H1.8Z" fill="#bcbcbc"/><path d="M8.6 1.6L10 0.4M9.6 3.4L11 3M1 9.8L0 11" stroke="#bcbcbc" stroke-width="0.9"/></svg>
<div style="left:359.2px;top:121.0px;width:1.0px;height:16.6px;background:#3a3a3a;"></div>
<div style="left:370.1px;top:122.2px;width:12.8px;height:15.6px;background:#1b6a9e;border-radius:2px;"></div>
<svg style="left:371.2px;top:125.4px;" width="10.6" height="10.6" viewBox="0 0 10.6 10.6"><rect x="0.9" y="0.9" width="8.8" height="8.8" rx="1.2" fill="none" stroke="#e6f0f8" stroke-width="1.5"/><path d="M5.3 2.8V7.8M2.8 5.3H7.8" stroke="#ffffff" stroke-width="1.5" fill="none"/></svg>
<svg style="left:1121.3px;top:126.9px;" width="8.6" height="8.6" viewBox="0 0 8.6 8.6"><path d="M4.3 0V8.6M0 4.3H8.6" stroke="#d0d0d0" stroke-width="2.1" fill="none"/></svg>
<svg style="left:1145.9px;top:125.2px;" width="9.0" height="10.8" viewBox="0 0 10 12"><path d="M3.6 0.4h2.8l0.5 1H9.3v1.5H0.7V1.4H3.1z M1.3 3.5h7.4l-0.6 7.1q-0.1 0.9-1 0.9H2.9q-0.9 0-1-0.9z" fill="#c0c0c0"/><path d="M3.3 4.6v5.6M5 4.6v5.6M6.7 4.6v5.6" stroke="#1b1b1b" stroke-width="0.6" stroke-opacity="0.65" fill="none"/></svg>
<svg style="left:645.0px;top:150.4px;" width="4.86" height="5.58" viewBox="0 0 4.86 5.58"><path d="M0 0L4.86 2.79L0 5.58Z" fill="#c8c8c8"/></svg>
<svg style="left:725.4px;top:168.2px;" width="10" height="10" viewBox="0 0 10 10"><circle cx="6.2" cy="3.8" r="2.7" fill="none" stroke="#178417" stroke-width="1.5"/><path d="M4.2 5.8L0.8 9.2" stroke="#178417" stroke-width="1.7"/></svg>
<div style="left:639.0px;top:186.8px;width:520.8px;height:17.8px;background:#0c0c0c;border-radius:2px;"></div>
<div style="left:639.2px;top:207.4px;width:520.7px;height:512.2px;border:1px solid #363636;"></div>
<svg style="left:647.2px;top:214.8px;" width="5.58" height="5.58" viewBox="0 0 5.58 5.58"><path d="M0 0L5.58 0L2.79 5.58Z" fill="#c8c8c8"/></svg>
<svg style="left:732.2px;top:214.0px;" width="7" height="9.6" viewBox="0 0 7 9.6"><rect x="0" y="0.9" width="7" height="8.7" rx="0.9" fill="#d8d8d8"/><rect x="2" y="0" width="3" height="2" fill="#d8d8d8"/><path d="M1.6 4H5.4M1.6 6H5.4" stroke="#1b1b1b" stroke-width="0.8"/></svg>
<div style="left:748.0px;top:209.8px;width:18.4px;height:18.2px;background:#383838;border-radius:2.5px;"></div>
<svg style="left:751.9px;top:213.1px;" width="9.5" height="11.399999999999999" viewBox="0 0 10 12"><path d="M3.6 0.4h2.8l0.5 1H9.3v1.5H0.7V1.4H3.1z M1.3 3.5h7.4l-0.6 7.1q-0.1 0.9-1 0.9H2.9q-0.9 0-1-0.9z" fill="#c0c0c0"/><path d="M3.3 4.6v5.6M5 4.6v5.6M6.7 4.6v5.6" stroke="#383838" stroke-width="0.6" stroke-opacity="0.65" fill="none"/></svg>
<div style="left:773.2px;top:209.8px;width:19.0px;height:18.2px;background:#383838;border-radius:2.5px;"></div>
<svg style="left:777.0px;top:213.2px;" width="11.399999999999999" height="11.399999999999999" viewBox="0 0 12 12"><g transform="rotate(-42 6 6)"><path d="M11.2 6L8.4 2.9H1.8V9.1H8.4Z" fill="none" stroke="#d0d0d0" stroke-width="1.45" stroke-linejoin="round"/><circle cx="8.3" cy="6" r="0.85" fill="#d0d0d0"/></g></svg>
<div style="left:649.7px;top:230.2px;width:1.0px;height:484.0px;background:#343434;"></div>
<div style="left:700.8px;top:231.0px;width:456.2px;height:18.2px;background:#0c0c0c;border-radius:2px;"></div>
<div style="left:658.0px;top:253.6px;width:499.0px;height:1.0px;background:#343434;"></div>
<div style="left:672.0px;top:259.4px;width:18.0px;height:17.8px;background:#383838;border-radius:2.5px;"></div>
<svg style="left:676.0px;top:262.4px;" width="9.399999999999999" height="11.28" viewBox="0 0 10 12"><path d="M3.6 0.4h2.8l0.5 1H9.3v1.5H0.7V1.4H3.1z M1.3 3.5h7.4l-0.6 7.1q-0.1 0.9-1 0.9H2.9q-0.9 0-1-0.9z" fill="#c0c0c0"/><path d="M3.3 4.6v5.6M5 4.6v5.6M6.7 4.6v5.6" stroke="#383838" stroke-width="0.6" stroke-opacity="0.65" fill="none"/></svg>
<svg style="left:702.4px;top:264.6px;" width="4.86" height="5.58" viewBox="0 0 4.86 5.58"><path d="M0 0L4.86 2.79L0 5.58Z" fill="#c8c8c8"/></svg>
<div style="left:804.0px;top:259.0px;width:19.0px;height:18.2px;background:#383838;border-radius:2.5px;"></div>
<svg style="left:807.8px;top:262.4px;" width="11.399999999999999" height="11.399999999999999" viewBox="0 0 12 12"><g transform="rotate(-42 6 6)"><path d="M11.2 6L8.4 2.9H1.8V9.1H8.4Z" fill="none" stroke="#d0d0d0" stroke-width="1.45" stroke-linejoin="round"/><circle cx="8.3" cy="6" r="0.85" fill="#d0d0d0"/></g></svg>
<div style="left:672.0px;top:280.2px;width:18.0px;height:17.8px;background:#383838;border-radius:2.5px;"></div>
<svg style="left:676.0px;top:283.2px;" width="9.399999999999999" height="11.28" viewBox="0 0 10 12"><path d="M3.6 0.4h2.8l0.5 1H9.3v1.5H0.7V1.4H3.1z M1.3 3.5h7.4l-0.6 7.1q-0.1 0.9-1 0.9H2.9q-0.9 0-1-0.9z" fill="#c0c0c0"/><path d="M3.3 4.6v5.6M5 4.6v5.6M6.7 4.6v5.6" stroke="#383838" stroke-width="0.6" stroke-opacity="0.65" fill="none"/></svg>
<svg style="left:702.4px;top:285.5px;" width="4.86" height="5.58" viewBox="0 0 4.86 5.58"><path d="M0 0L4.86 2.79L0 5.58Z" fill="#c8c8c8"/></svg>
<div style="left:802.0px;top:279.9px;width:19.0px;height:18.2px;background:#383838;border-radius:2.5px;"></div>
<svg style="left:805.8px;top:283.3px;" width="11.399999999999999" height="11.399999999999999" viewBox="0 0 12 12"><g transform="rotate(-42 6 6)"><path d="M11.2 6L8.4 2.9H1.8V9.1H8.4Z" fill="none" stroke="#d0d0d0" stroke-width="1.45" stroke-linejoin="round"/><circle cx="8.3" cy="6" r="0.85" fill="#d0d0d0"/></g></svg>
<div style="left:672.0px;top:301.1px;width:18.0px;height:17.8px;background:#383838;border-radius:2.5px;"></div>
<svg style="left:676.0px;top:304.1px;" width="9.399999999999999" height="11.28" viewBox="0 0 10 12"><path d="M3.6 0.4h2.8l0.5 1H9.3v1.5H0.7V1.4H3.1z M1.3 3.5h7.4l-0.6 7.1q-0.1 0.9-1 0.9H2.9q-0.9 0-1-0.9z" fill="#c0c0c0"/><path d="M3.3 4.6v5.6M5 4.6v5.6M6.7 4.6v5.6" stroke="#383838" stroke-width="0.6" stroke-opacity="0.65" fill="none"/></svg>
<svg style="left:702.4px;top:306.3px;" width="4.86" height="5.58" viewBox="0 0 4.86 5.58"><path d="M0 0L4.86 2.79L0 5.58Z" fill="#c8c8c8"/></svg>
<div style="left:795.8px;top:300.7px;width:19.0px;height:18.2px;background:#383838;border-radius:2.5px;"></div>
<svg style="left:799.6px;top:304.1px;" width="11.399999999999999" height="11.399999999999999" viewBox="0 0 12 12"><g transform="rotate(-42 6 6)"><path d="M11.2 6L8.4 2.9H1.8V9.1H8.4Z" fill="none" stroke="#d0d0d0" stroke-width="1.45" stroke-linejoin="round"/><circle cx="8.3" cy="6" r="0.85" fill="#d0d0d0"/></g></svg>
<div style="left:672.0px;top:321.9px;width:18.0px;height:17.8px;background:#383838;border-radius:2.5px;"></div>
<svg style="left:676.0px;top:324.9px;" width="9.399999999999999" height="11.28" viewBox="0 0 10 12"><path d="M3.6 0.4h2.8l0.5 1H9.3v1.5H0.7V1.4H3.1z M1.3 3.5h7.4l-0.6 7.1q-0.1 0.9-1 0.9H2.9q-0.9 0-1-0.9z" fill="#c0c0c0"/><path d="M3.3 4.6v5.6M5 4.6v5.6M6.7 4.6v5.6" stroke="#383838" stroke-width="0.6" stroke-opacity="0.65" fill="none"/></svg>
<svg style="left:702.4px;top:327.2px;" width="4.86" height="5.58" viewBox="0 0 4.86 5.58"><path d="M0 0L4.86 2.79L0 5.58Z" fill="#c8c8c8"/></svg>
<div style="left:816.9px;top:321.6px;width:19.0px;height:18.2px;background:#383838;border-radius:2.5px;"></div>
<svg style="left:820.7px;top:325.0px;" width="11.399999999999999" height="11.399999999999999" viewBox="0 0 12 12"><g transform="rotate(-42 6 6)"><path d="M11.2 6L8.4 2.9H1.8V9.1H8.4Z" fill="none" stroke="#d0d0d0" stroke-width="1.45" stroke-linejoin="round"/><circle cx="8.3" cy="6" r="0.85" fill="#d0d0d0"/></g></svg>
<div style="left:672.0px;top:342.8px;width:18.0px;height:17.8px;background:#383838;border-radius:2.5px;"></div>
<svg style="left:676.0px;top:345.8px;" width="9.399999999999999" height="11.28" viewBox="0 0 10 12"><path d="M3.6 0.4h2.8l0.5 1H9.3v1.5H0.7V1.4H3.1z M1.3 3.5h7.4l-0.6 7.1q-0.1 0.9-1 0.9H2.9q-0.9 0-1-0.9z" fill="#c0c0c0"/><path d="M3.3 4.6v5.6M5 4.6v5.6M6.7 4.6v5.6" stroke="#383838" stroke-width="0.6" stroke-opacity="0.65" fill="none"/></svg>
<svg style="left:702.4px;top:348.0px;" width="4.86" height="5.58" viewBox="0 0 4.86 5.58"><path d="M0 0L4.86 2.79L0 5.58Z" fill="#c8c8c8"/></svg>
<div style="left:795.0px;top:342.4px;width:19.0px;height:18.2px;background:#383838;border-radius:2.5px;"></div>
<svg style="left:798.8px;top:345.8px;" width="11.399999999999999" height="11.399999999999999" viewBox="0 0 12 12"><g transform="rotate(-42 6 6)"><path d="M11.2 6L8.4 2.9H1.8V9.1H8.4Z" fill="none" stroke="#d0d0d0" stroke-width="1.45" stroke-linejoin="round"/><circle cx="8.3" cy="6" r="0.85" fill="#d0d0d0"/></g></svg>
<div style="left:672.0px;top:363.6px;width:18.0px;height:17.8px;background:#383838;border-radius:2.5px;"></div>
<svg style="left:676.0px;top:366.6px;" width="9.399999999999999" height="11.28" viewBox="0 0 10 12"><path d="M3.6 0.4h2.8l0.5 1H9.3v1.5H0.7V1.4H3.1z M1.3 3.5h7.4l-0.6 7.1q-0.1 0.9-1 0.9H2.9q-0.9 0-1-0.9z" fill="#c0c0c0"/><path d="M3.3 4.6v5.6M5 4.6v5.6M6.7 4.6v5.6" stroke="#383838" stroke-width="0.6" stroke-opacity="0.65" fill="none"/></svg>
<svg style="left:702.0px;top:369.1px;" width="5.58" height="5.58" viewBox="0 0 5.58 5.58"><path d="M0 0L5.58 0L2.79 5.58Z" fill="#c8c8c8"/></svg>
<div style="left:803.0px;top:363.2px;width:19.0px;height:18.2px;background:#383838;border-radius:2.5px;"></div>
<svg style="left:806.8px;top:366.7px;" width="11.399999999999999" height="11.399999999999999" viewBox="0 0 12 12"><g transform="rotate(-42 6 6)"><path d="M11.2 6L8.4 2.9H1.8V9.1H8.4Z" fill="none" stroke="#d0d0d0" stroke-width="1.45" stroke-linejoin="round"/><circle cx="8.3" cy="6" r="0.85" fill="#d0d0d0"/></g></svg>
<div style="left:705.2px;top:383.4px;width:1.0px;height:311.6px;background:#343434;"></div>
<div style="left:756.0px;top:384.4px;width:401.0px;height:18.2px;background:#0c0c0c;border-radius:2px;"></div>
<div style="left:713.0px;top:407.0px;width:444.0px;height:1.0px;background:#343434;"></div>
<svg style="left:767.0px;top:417.8px;" width="5.58" height="5.58" viewBox="0 0 5.58 5.58"><path d="M0 0L5.58 0L2.79 5.58Z" fill="#c8c8c8"/></svg>
<div style="left:940.1px;top:415.5px;width:11.1px;height:10.5px;border:1.5px solid #ececec;border-radius:1px;"></div>
<div style="left:959.0px;top:413.0px;width:18.2px;height:18.0px;background:#383838;border-radius:2.5px;"></div>
<svg style="left:962.9px;top:415.9px;" width="9.5" height="11.399999999999999" viewBox="0 0 10 12"><path d="M3.6 0.4h2.8l0.5 1H9.3v1.5H0.7V1.4H3.1z M1.3 3.5h7.4l-0.6 7.1q-0.1 0.9-1 0.9H2.9q-0.9 0-1-0.9z" fill="#c0c0c0"/><path d="M3.3 4.6v5.6M5 4.6v5.6M6.7 4.6v5.6" stroke="#383838" stroke-width="0.6" stroke-opacity="0.65" fill="none"/></svg>
<div style="left:984.0px;top:413.0px;width:18.6px;height:18.0px;background:#383838;border-radius:2.5px;"></div>
<svg style="left:987.6px;top:416.3px;" width="11.399999999999999" height="11.399999999999999" viewBox="0 0 12 12"><g transform="rotate(-42 6 6)"><path d="M11.2 6L8.4 2.9H1.8V9.1H8.4Z" fill="none" stroke="#d0d0d0" stroke-width="1.45" stroke-linejoin="round"/><circle cx="8.3" cy="6" r="0.85" fill="#d0d0d0"/></g></svg>
<div style="left:1009.0px;top:413.0px;width:19.0px;height:18.0px;background:#383838;border-radius:2.5px;"></div>
<svg style="left:1013.3px;top:416.6px;" width="10.56" height="10.56" viewBox="0 0 12 12"><path d="M2 5.2A4.2 4.2 0 0 1 9.3 3.2" fill="none" stroke="#d0d0d0" stroke-width="2.1"/><path d="M10.9 0.9V5H6.8Z" fill="#d0d0d0"/><path d="M10 6.8A4.2 4.2 0 0 1 2.7 8.8" fill="none" stroke="#d0d0d0" stroke-width="2.1"/><path d="M1.1 11.1V7H5.2Z" fill="#d0d0d0"/></svg>
<div style="left:770.4px;top:433.4px;width:1.0px;height:243.4px;background:#343434;"></div>
<div style="left:848.0px;top:434.4px;width:96.8px;height:17.4px;background:#383838;border-radius:2.5px;"></div>
<div style="left:952.8px;top:434.4px;width:96.4px;height:17.4px;background:#383838;border-radius:2.5px;"></div>
<div style="left:1057.2px;top:434.4px;width:95.8px;height:17.4px;background:#383838;border-radius:2.5px;"></div>
<div style="left:848.0px;top:454.9px;width:96.8px;height:17.4px;background:#383838;border-radius:2.5px;"></div>
<div style="left:952.8px;top:454.9px;width:96.4px;height:17.4px;background:#383838;border-radius:2.5px;"></div>
<div style="left:1057.2px;top:454.9px;width:95.8px;height:17.4px;background:#383838;border-radius:2.5px;"></div>
<div style="left:848.0px;top:475.5px;width:96.8px;height:17.4px;background:#383838;border-radius:2.5px;"></div>
<div style="left:952.8px;top:475.5px;width:96.4px;height:17.4px;background:#383838;border-radius:2.5px;"></div>
<div style="left:1057.2px;top:475.5px;width:95.8px;height:17.4px;background:#383838;border-radius:2.5px;"></div>
<div style="left:848.0px;top:496.1px;width:96.8px;height:17.4px;background:#383838;border-radius:2.5px;"></div>
<div style="left:952.8px;top:496.1px;width:96.4px;height:17.4px;background:#383838;border-radius:2.5px;"></div>
<div style="left:1057.2px;top:496.1px;width:95.8px;height:17.4px;background:#383838;border-radius:2.5px;"></div>
<div style="left:855.0px;top:522.4px;width:248.0px;height:6.2px;background:#343434;border-radius:2.5px;"></div>
<div style="left:847.6px;top:517.8px;width:15.0px;height:15.0px;background:#3c3c3c;border-radius:50%;border:1.2px solid #b4b4b4;"></div>
<div style="left:1110.0px;top:516.8px;width:38.0px;height:16.4px;background:#383838;border-radius:2.5px;"></div>
<div style="left:855.0px;top:542.9px;width:248.0px;height:6.2px;background:#343434;border-radius:2.5px;"></div>
<div style="left:847.6px;top:538.3px;width:15.0px;height:15.0px;background:#3c3c3c;border-radius:50%;border:1.2px solid #b4b4b4;"></div>
<div style="left:1110.0px;top:537.3px;width:38.0px;height:16.4px;background:#383838;border-radius:2.5px;"></div>
<div style="left:855.0px;top:563.5px;width:248.0px;height:6.2px;background:#343434;border-radius:2.5px;"></div>
<div style="left:847.6px;top:558.9px;width:15.0px;height:15.0px;background:#3c3c3c;border-radius:50%;border:1.2px solid #b4b4b4;"></div>
<div style="left:1110.0px;top:557.9px;width:38.0px;height:16.4px;background:#383838;border-radius:2.5px;"></div>
<div style="left:855.0px;top:584.0px;width:248.0px;height:6.2px;background:#343434;border-radius:2.5px;"></div>
<div style="left:847.6px;top:579.4px;width:15.0px;height:15.0px;background:#3c3c3c;border-radius:50%;border:1.2px solid #b4b4b4;"></div>
<div style="left:1110.0px;top:578.4px;width:38.0px;height:16.4px;background:#383838;border-radius:2.5px;"></div>
<div style="left:848.0px;top:599.6px;width:309.0px;height:17.4px;background:#383838;border-radius:2.5px;"></div>
<svg style="left:1142.6px;top:605.2px;" width="9" height="6" viewBox="0 0 9 6"><path d="M0 0H9L4.5 6Z" fill="#d8d8d8"/></svg>
<div style="left:848.0px;top:620.4px;width:150.2px;height:17.4px;background:#383838;border-radius:2.5px;"></div>
<div style="left:1005.0px;top:620.4px;width:150.2px;height:17.4px;background:#383838;border-radius:2.5px;"></div>
<div style="left:848.0px;top:641.4px;width:150.2px;height:17.4px;background:#383838;border-radius:2.5px;"></div>
<div style="left:1005.0px;top:641.4px;width:150.2px;height:17.4px;background:#383838;border-radius:2.5px;"></div>
<div style="left:855.4px;top:663.6px;width:13.2px;height:13.2px;background:#3c3c3c;border-radius:50%;"></div>
<div style="left:902.2px;top:663.6px;width:13.2px;height:13.2px;background:#3c3c3c;border-radius:50%;"></div>
<div style="left:906.2px;top:667.6px;width:5.2px;height:5.2px;background:#e0e0e0;border-radius:50%;"></div>
<div style="left:873.0px;top:682.2px;width:18.8px;height:15.8px;background:#383838;border-radius:2.5px;"></div>
<svg style="left:878.4px;top:686.1px;" width="8" height="8" viewBox="0 0 8 8"><path d="M4.0 0V8M0 4.0H8" stroke="#e0e0e0" stroke-width="2" fill="none"/></svg>
<div style="left:658.0px;top:701.2px;width:18.0px;height:15.8px;background:#383838;border-radius:2.5px;"></div>
<svg style="left:663.0px;top:705.1px;" width="8" height="8" viewBox="0 0 8 8"><path d="M4.0 0V8M0 4.0H8" stroke="#e0e0e0" stroke-width="2" fill="none"/></svg>
<svg style="left:1152.0px;top:787.0px;" width="8" height="8" viewBox="0 0 8 8"><path d="M8 1L1 8M8 4.5L4.5 8" stroke="#3a3a3a" stroke-width="1"/></svg>
<svg style="left:263.0px;top:145.0px;" width="298.8" height="649.8" viewBox="263.0 145.0 298.8 649.8"><defs><linearGradient id="gnd" x1="0" y1="0" x2="0" y2="1"><stop offset="0" stop-color="#eeeef1"/><stop offset="0.2" stop-color="#e6e6ea"/><stop offset="0.30" stop-color="#d2d3da"/><stop offset="0.38" stop-color="#b4b6c4"/><stop offset="0.45" stop-color="#a0a5bc"/><stop offset="0.53" stop-color="#929ab6"/><stop offset="0.67" stop-color="#808bab"/><stop offset="0.8" stop-color="#717ea2"/><stop offset="1" stop-color="#67759a"/></linearGradient><filter id="nz" x="0" y="0" width="100%" height="100%"><feTurbulence type="fractalNoise" baseFrequency="0.012 0.02" numOctaves="3" seed="7" result="n"/><feColorMatrix in="n" type="matrix" values="0 0 0 0 1  0 0 0 0 1  0 0 0 0 1  1.6 0 0 0 -0.62"/></filter><filter id="nz2" x="0" y="0" width="100%" height="100%"><feTurbulence type="fractalNoise" baseFrequency="0.014 0.022" numOctaves="3" seed="23" result="n"/><feColorMatrix in="n" type="matrix" values="0 0 0 0 0.35  0 0 0 0 0.42  0 0 0 0 0.62  0 1.5 0 0 -0.6"/></filter><filter id="bl" x="263.0" y="145.0" width="298.8" height="649.8" filterUnits="userSpaceOnUse"><feGaussianBlur stdDeviation="0.7"/></filter><filter id="bl2" x="263.0" y="145.0" width="298.8" height="649.8" filterUnits="userSpaceOnUse"><feGaussianBlur stdDeviation="0.55"/></filter></defs><rect x="263.0" y="145.0" width="298.8" height="649.8" fill="url(#gnd)"/><rect x="263.0" y="145.0" width="298.8" height="649.8" filter="url(#nz)" opacity="0.30"/><linearGradient id="mg" x1="0" y1="0" x2="0" y2="1"><stop offset="0.1" stop-color="#404040"/><stop offset="0.5" stop-color="#fff"/></linearGradient><mask id="mk" maskUnits="userSpaceOnUse" x="263.0" y="145.0" width="298.8" height="649.8"><rect x="263.0" y="145.0" width="298.8" height="649.8" fill="url(#mg)"/></mask><g mask="url(#mk)"><rect x="263.0" y="145.0" width="298.8" height="649.8" filter="url(#nz2)" opacity="0.30"/></g><linearGradient id="lg" gradientUnits="userSpaceOnUse" x1="263.0" y1="0" x2="450" y2="0"><stop offset="0" stop-color="#40424c" stop-opacity="0.17"/><stop offset="1" stop-color="#40424c" stop-opacity="0"/></linearGradient><linearGradient id="lgm" gradientUnits="userSpaceOnUse" x1="0" y1="330" x2="0" y2="470"><stop offset="0" stop-color="#fff"/><stop offset="1" stop-color="#000"/></linearGradient><mask id="mkl" maskUnits="userSpaceOnUse" x="263.0" y="145.0" width="298.8" height="649.8"><rect x="263.0" y="145.0" width="298.8" height="649.8" fill="url(#lgm)"/></mask><rect x="263.0" y="145.0" width="190" height="330" fill="url(#lg)" mask="url(#mkl)"/><linearGradient id="mn" gradientUnits="userSpaceOnUse" x1="0" y1="594" x2="0" y2="634"><stop offset="0" stop-color="#000"/><stop offset="1" stop-color="#fff"/></linearGradient><linearGradient id="mf" gradientUnits="userSpaceOnUse" x1="0" y1="594" x2="0" y2="634"><stop offset="0" stop-color="#fff"/><stop offset="1" stop-color="#000"/></linearGradient><mask id="mkn" maskUnits="userSpaceOnUse" x="263.0" y="145.0" width="298.8" height="649.8"><rect x="263.0" y="145.0" width="298.8" height="649.8" fill="url(#mn)"/></mask><mask id="mkf" maskUnits="userSpaceOnUse" x="263.0" y="145.0" width="298.8" height="649.8"><rect x="263.0" y="145.0" width="298.8" height="649.8" fill="url(#mf)"/></mask><g opacity="0.58"><path d="M261.0 792.3L264.9 796.8M560.3 796.8L563.8 792.8M261.0 785.1L271.3 796.8M553.9 796.8L563.8 785.6M261.0 778.0L277.6 796.8M547.6 796.8L563.8 778.5M261.0 771.0L284.0 796.8M541.2 796.8L563.8 771.4M261.0 764.0L290.4 796.8M534.8 796.8L563.8 764.5M261.0 757.2L296.7 796.8M528.5 796.8L563.8 757.6M261.0 750.4L303.1 796.8M522.1 796.8L563.8 750.9M261.0 743.7L309.5 796.8M515.7 796.8L563.8 744.2M261.0 730.6L322.2 796.8M503.0 796.8L563.8 731.1M261.0 724.2L328.6 796.8M496.6 796.8L563.8 724.6M261.0 717.9L334.9 796.8M490.3 796.8L563.8 718.3M261.0 711.6L341.3 796.8M483.9 796.8L563.8 712.0M261.0 705.4L347.7 796.8M477.5 796.8L563.8 705.8M261.0 699.3L354.0 796.8M471.2 796.8L563.8 699.7M261.0 693.2L360.4 796.8M464.8 796.8L563.8 693.7M261.0 687.3L366.8 796.8M458.4 796.8L563.8 687.7M261.0 681.4L373.1 796.8M452.1 796.8L563.8 681.8M261.0 675.5L379.5 796.8M445.7 796.8L563.8 675.9M261.0 669.8L385.9 796.8M439.3 796.8L563.8 670.2M261.0 664.1L392.2 796.8M433.0 796.8L563.8 664.5M261.0 658.5L398.6 796.8M426.6 796.8L563.8 658.9M261.0 652.9L405.0 796.8M420.2 796.8L563.8 653.3M261.0 647.4L411.4 796.8M413.8 796.8L563.8 647.8M261.0 642.0L417.7 796.8M407.5 796.8L563.8 642.4M261.0 636.6L424.1 796.8M401.1 796.8L563.8 637.0M261.0 631.3L430.5 796.8M394.7 796.8L563.8 631.7M261.0 626.0L436.8 796.8M388.4 796.8L563.8 626.4M261.0 620.8L443.2 796.8M382.0 796.8L563.8 621.2M261.0 615.7L449.6 796.8M375.6 796.8L563.8 616.1M261.0 610.6L455.9 796.8M369.3 796.8L563.8 611.0M261.0 605.6L462.3 796.8M362.9 796.8L563.8 606.0M261.0 600.6L468.7 796.8M356.5 796.8L563.8 601.0M261.0 595.7L475.0 796.8M350.2 796.8L563.8 596.1M261.0 590.9L481.4 796.8M343.8 796.8L563.8 591.2M261.0 586.1L487.8 796.8M337.4 796.8L563.8 586.4M261.0 581.3L494.1 796.8M331.1 796.8L563.8 581.7M261.0 576.6L500.5 796.8M324.7 796.8L563.8 577.0M261.0 571.9L506.9 796.8M318.3 796.8L563.8 572.3M261.0 567.3L513.2 796.8M312.0 796.8L563.8 567.7M261.0 562.8L519.6 796.8M305.6 796.8L563.8 563.1M261.0 558.3L526.0 796.8M299.2 796.8L563.8 558.6M261.0 553.8L532.3 796.8M292.9 796.8L563.8 554.2M261.0 549.4L538.7 796.8M286.5 796.8L563.8 549.7M261.0 545.0L545.1 796.8M280.1 796.8L563.8 545.4M261.0 540.7L551.4 796.8M273.8 796.8L563.8 541.0M261.0 536.4L557.8 796.8M267.4 796.8L563.8 536.8M261.0 532.2L563.8 796.5M261.0 796.8L563.8 532.5M261.0 528.0L563.8 790.9M261.0 791.3L563.8 528.3M261.0 523.8L563.8 785.5M261.0 785.8L563.8 524.2M261.0 519.7L563.8 780.0M261.0 780.4L563.8 520.1M261.0 515.6L563.8 774.7M261.0 775.0L563.8 516.0M261.0 511.6L563.8 769.4M261.0 769.7L563.8 511.9M261.0 507.6L563.8 764.1M261.0 764.5L563.8 508.0" stroke="#f0f1f8" stroke-width="0.75" fill="none"/><path d="M261.0 503.7L563.8 758.9M261.0 759.2L563.8 504.0" stroke="#f0f1f8" stroke-width="0.76" fill="none"/><path d="M261.0 499.7L563.8 753.7M261.0 754.1L563.8 500.1" stroke="#f0f1f8" stroke-width="0.77" fill="none"/><path d="M261.0 492.0L563.8 743.6M261.0 743.9L563.8 492.4" stroke="#f0f1f8" stroke-width="0.79" fill="none"/><path d="M261.0 488.2L563.8 738.6M261.0 738.9L563.8 488.6M261.0 484.5L563.8 733.6M261.0 733.9L563.8 484.8" stroke="#f0f1f8" stroke-width="0.8" fill="none"/><path d="M261.0 480.7L563.8 728.7M261.0 729.0L563.8 481.1" stroke="#f0f1f8" stroke-width="0.81" fill="none"/><path d="M261.0 477.0L563.8 723.8M261.0 724.2L563.8 477.4" stroke="#f0f1f8" stroke-width="0.82" fill="none"/><path d="M261.0 473.4L563.8 719.0M261.0 719.3L563.8 473.7" stroke="#f0f1f8" stroke-width="0.83" fill="none"/><path d="M261.0 469.8L563.8 714.2M261.0 714.6L563.8 470.1" stroke="#f0f1f8" stroke-width="0.84" fill="none"/><path d="M261.0 466.2L563.8 709.5M261.0 709.8L563.8 466.5" stroke="#f0f1f8" stroke-width="0.85" fill="none"/><path d="M261.0 462.6L563.8 704.8M261.0 705.1L563.8 462.9M261.0 459.1L563.8 700.2M261.0 700.5L563.8 459.4" stroke="#f0f1f8" stroke-width="0.86" fill="none"/><path d="M261.0 455.6L563.8 695.6M261.0 695.9L563.8 455.9" stroke="#f0f1f8" stroke-width="0.87" fill="none"/><path d="M261.0 452.1L563.8 691.0M261.0 691.3L563.8 452.4" stroke="#f0f1f8" stroke-width="0.88" fill="none"/><path d="M261.0 448.7L563.8 686.5M261.0 686.8L563.8 449.0M261.0 445.3L563.8 682.0M261.0 682.3L563.8 445.6" stroke="#f0f1f8" stroke-width="0.89" fill="none"/><path d="M261.0 441.9L563.8 677.6M261.0 677.9L563.8 442.2" stroke="#f0f1f8" stroke-width="0.9" fill="none"/><path d="M261.0 438.6L563.8 673.2M261.0 673.5L563.8 438.9" stroke="#f0f1f8" stroke-width="0.91" fill="none"/><path d="M261.0 435.3L563.8 668.8M261.0 669.1L563.8 435.6M261.0 432.0L563.8 664.5M261.0 664.8L563.8 432.3M261.0 428.8L563.8 660.2M261.0 660.5L563.8 429.1M261.0 425.5L563.8 656.0M261.0 656.3L563.8 425.8M261.0 422.4L563.8 651.8M261.0 652.1L563.8 422.7M261.0 419.2L563.8 647.6M261.0 647.9L563.8 419.5M261.0 416.1L563.8 643.5M261.0 643.8L563.8 416.4M261.0 412.9L563.8 639.4M261.0 639.7L563.8 413.2M261.0 409.9L563.8 635.3M261.0 635.6L563.8 410.2M261.0 406.8L563.8 631.3M261.0 631.6L563.8 407.1M261.0 403.8L563.8 627.3M261.0 627.6L563.8 404.1M261.0 400.8L563.8 623.3M261.0 623.6L563.8 401.1M261.0 397.8L563.8 619.4M261.0 619.7L563.8 398.1M261.0 394.8L563.8 615.5M261.0 615.8L563.8 395.1M261.0 391.9L563.8 611.7M261.0 612.0L563.8 392.2M261.0 389.0L563.8 607.8M261.0 608.1L563.8 389.3M261.0 386.1L563.8 604.1M261.0 604.3L563.8 386.4M261.0 383.3L563.8 600.3M261.0 600.6L563.8 383.6M261.0 380.4L563.8 596.6M261.0 596.8L563.8 380.7M261.0 377.6L563.8 592.9M261.0 593.1L563.8 377.9M261.0 374.9L563.8 589.2M261.0 589.5L563.8 375.1M261.0 372.1L563.8 585.6M261.0 585.8L563.8 372.4M261.0 369.4L563.8 581.9M261.0 582.2L563.8 369.6M261.0 366.6L563.8 578.4M261.0 578.6L563.8 366.9M261.0 363.9L563.8 574.8M261.0 575.1L563.8 364.2M261.0 361.3L563.8 571.3M261.0 571.6L563.8 361.5M261.0 358.6L563.8 567.8M261.0 568.1L563.8 358.9M261.0 356.0L563.8 564.3M261.0 564.6L563.8 356.3M261.0 353.4L563.8 560.9M261.0 561.2L563.8 353.6" stroke="#f0f1f8" stroke-width="0.92" fill="none"/></g><g opacity="0.57"><path d="M261.0 350.8L563.8 557.5M261.0 557.7L563.8 351.1" stroke="#f0f1f8" stroke-width="0.92" fill="none"/></g><g opacity="0.56"><path d="M261.0 348.2L563.8 554.1M261.0 554.4L563.8 348.5" stroke="#f0f1f8" stroke-width="0.92" fill="none"/></g><g opacity="0.54"><path d="M261.0 343.1L563.8 547.4M261.0 547.7L563.8 343.4" stroke="#f0f1f8" stroke-width="0.92" fill="none"/></g><g opacity="0.53"><path d="M261.0 340.6L563.8 544.1M261.0 544.4L563.8 340.9" stroke="#f0f1f8" stroke-width="0.92" fill="none"/></g><g opacity="0.51"><path d="M261.0 338.1L563.8 540.8M261.0 541.1L563.8 338.4" stroke="#f0f1f8" stroke-width="0.92" fill="none"/></g><g opacity="0.5"><path d="M261.0 335.7L563.8 537.6M261.0 537.8L563.8 335.9" stroke="#f0f1f8" stroke-width="0.92" fill="none"/></g><g opacity="0.49"><path d="M261.0 333.2L563.8 534.3M261.0 534.6L563.8 333.5" stroke="#f0f1f8" stroke-width="0.92" fill="none"/></g><g opacity="0.48"><path d="M261.0 330.8L563.8 531.1M261.0 531.4L563.8 331.1" stroke="#f0f1f8" stroke-width="0.92" fill="none"/></g><g opacity="0.47"><path d="M261.0 328.4L563.8 527.9M261.0 528.2L563.8 328.6" stroke="#f0f1f8" stroke-width="0.92" fill="none"/></g><g opacity="0.46"><path d="M261.0 326.0L563.8 524.8M261.0 525.1L563.8 326.2" stroke="#f0f1f8" stroke-width="0.92" fill="none"/></g><g opacity="0.45"><path d="M261.0 323.6L563.8 521.7M261.0 521.9L563.8 323.9" stroke="#f0f1f8" stroke-width="0.92" fill="none"/></g><g opacity="0.43"><path d="M261.0 321.2L563.8 518.5M261.0 518.8L563.8 321.5" stroke="#f0f1f8" stroke-width="0.92" fill="none"/></g><g opacity="0.42"><path d="M261.0 318.9L563.8 515.5M261.0 515.7L563.8 319.2" stroke="#f0f1f8" stroke-width="0.92" fill="none"/></g><g opacity="0.41"><path d="M261.0 316.6L563.8 512.4M261.0 512.7L563.8 316.8" stroke="#f0f1f8" stroke-width="0.92" fill="none"/></g><g opacity="0.4"><path d="M261.0 314.3L563.8 509.4M261.0 509.6L563.8 314.5" stroke="#f0f1f8" stroke-width="0.92" fill="none"/></g><g opacity="0.39"><path d="M261.0 312.0L563.8 506.3M261.0 506.6L563.8 312.2" stroke="#f0f1f8" stroke-width="0.92" fill="none"/></g><g opacity="0.38"><path d="M261.0 309.7L563.8 503.4M261.0 503.6L563.8 310.0" stroke="#f0f1f8" stroke-width="0.92" fill="none"/></g><g opacity="0.37"><path d="M261.0 307.5L563.8 500.4M261.0 500.6L563.8 307.7" stroke="#f0f1f8" stroke-width="0.92" fill="none"/></g><g opacity="0.36"><path d="M261.0 305.2L563.8 497.4M261.0 497.7L563.8 305.5" stroke="#f0f1f8" stroke-width="0.92" fill="none"/></g><g opacity="0.35"><path d="M261.0 303.0L563.8 494.5M261.0 494.8L563.8 303.2" stroke="#f0f1f8" stroke-width="0.92" fill="none"/></g><g opacity="0.34"><path d="M261.0 300.8L563.8 491.6M261.0 491.8L563.8 301.0" stroke="#f0f1f8" stroke-width="0.92" fill="none"/></g><g opacity="0.33"><path d="M261.0 298.6L563.8 488.7M261.0 489.0L563.8 298.8" stroke="#f0f1f8" stroke-width="0.92" fill="none"/></g><g opacity="0.32"><path d="M261.0 296.4L563.8 485.8M261.0 486.1L563.8 296.7" stroke="#f0f1f8" stroke-width="0.92" fill="none"/></g><g opacity="0.31"><path d="M261.0 294.3L563.8 483.0M261.0 483.3L563.8 294.5" stroke="#f0f1f8" stroke-width="0.92" fill="none"/></g><g opacity="0.3"><path d="M261.0 292.1L563.8 480.2M261.0 480.4L563.8 292.4" stroke="#f0f1f8" stroke-width="0.92" fill="none"/></g><g opacity="0.29"><path d="M261.0 290.0L563.8 477.4M261.0 477.6L563.8 290.2" stroke="#f0f1f8" stroke-width="0.92" fill="none"/></g><g opacity="0.28"><path d="M261.0 287.9L563.8 474.6M261.0 474.8L563.8 288.1M261.0 285.8L563.8 471.8M261.0 472.1L563.8 286.0" stroke="#f0f1f8" stroke-width="0.92" fill="none"/></g><g opacity="0.27"><path d="M261.0 283.7L563.8 469.1M261.0 469.3L563.8 283.9" stroke="#f0f1f8" stroke-width="0.92" fill="none"/></g><g opacity="0.26"><path d="M261.0 281.6L563.8 466.4M261.0 466.6L563.8 281.9" stroke="#f0f1f8" stroke-width="0.92" fill="none"/></g><g opacity="0.25"><path d="M261.0 279.6L563.8 463.7M261.0 463.9L563.8 279.8" stroke="#f0f1f8" stroke-width="0.92" fill="none"/></g><g opacity="0.24"><path d="M261.0 277.5L563.8 461.0M261.0 461.2L563.8 277.8" stroke="#f0f1f8" stroke-width="0.92" fill="none"/></g><g opacity="0.23"><path d="M261.0 275.5L563.8 458.3M261.0 458.5L563.8 275.8" stroke="#f0f1f8" stroke-width="0.92" fill="none"/></g><g opacity="0.22"><path d="M261.0 273.5L563.8 455.7M261.0 455.9L563.8 273.7" stroke="#f0f1f8" stroke-width="0.92" fill="none"/></g><g opacity="0.21"><path d="M261.0 271.5L563.8 453.0M261.0 453.3L563.8 271.8M261.0 269.5L563.8 450.4M261.0 450.7L563.8 269.8" stroke="#f0f1f8" stroke-width="0.92" fill="none"/></g><g opacity="0.2"><path d="M261.0 267.6L563.8 447.8M261.0 448.1L563.8 267.8" stroke="#f0f1f8" stroke-width="0.92" fill="none"/></g><g opacity="0.19"><path d="M261.0 265.6L563.8 445.2M261.0 445.5L563.8 265.8" stroke="#f0f1f8" stroke-width="0.92" fill="none"/></g><g opacity="0.18"><path d="M261.0 263.7L563.8 442.7M261.0 442.9L563.8 263.9" stroke="#f0f1f8" stroke-width="0.92" fill="none"/></g><g opacity="0.17"><path d="M261.0 261.7L563.8 440.1M261.0 440.4L563.8 262.0" stroke="#f0f1f8" stroke-width="0.92" fill="none"/></g><g opacity="0.16"><path d="M261.0 259.8L563.8 437.6M261.0 437.9L563.8 260.1M261.0 257.9L563.8 435.1M261.0 435.4L563.8 258.2" stroke="#f0f1f8" stroke-width="0.92" fill="none"/></g><g opacity="0.15"><path d="M261.0 256.0L563.8 432.6M261.0 432.9L563.8 256.3" stroke="#f0f1f8" stroke-width="0.92" fill="none"/></g><g opacity="0.14"><path d="M261.0 254.2L563.8 430.2M261.0 430.4L563.8 254.4" stroke="#f0f1f8" stroke-width="0.92" fill="none"/></g><g opacity="0.13"><path d="M261.0 252.3L563.8 427.7M261.0 427.9L563.8 252.5M261.0 250.4L563.8 425.3M261.0 425.5L563.8 250.7" stroke="#f0f1f8" stroke-width="0.92" fill="none"/></g><g opacity="0.12"><path d="M261.0 248.6L563.8 422.8M261.0 423.1L563.8 248.8" stroke="#f0f1f8" stroke-width="0.92" fill="none"/></g><g opacity="0.11"><path d="M261.0 246.8L563.8 420.4M261.0 420.7L563.8 247.0" stroke="#f0f1f8" stroke-width="0.92" fill="none"/></g><g opacity="0.1"><path d="M261.0 245.0L563.8 418.0M261.0 418.3L563.8 245.2" stroke="#f0f1f8" stroke-width="0.92" fill="none"/></g><g opacity="0.09"><path d="M261.0 241.4L563.8 413.3M261.0 413.5L563.8 241.6" stroke="#f0f1f8" stroke-width="0.92" fill="none"/></g><g opacity="0.08"><path d="M261.0 239.6L563.8 411.0M261.0 411.2L563.8 239.8" stroke="#f0f1f8" stroke-width="0.92" fill="none"/></g><g opacity="0.07"><path d="M261.0 237.8L563.8 408.6M261.0 408.9L563.8 238.0M261.0 236.1L563.8 406.3M261.0 406.5L563.8 236.3" stroke="#f0f1f8" stroke-width="0.92" fill="none"/></g><g opacity="0.06"><path d="M261.0 234.3L563.8 404.0M261.0 404.2L563.8 234.5" stroke="#f0f1f8" stroke-width="0.92" fill="none"/></g><g opacity="0.05"><path d="M261.0 232.6L563.8 401.7M261.0 402.0L563.8 232.8M261.0 230.9L563.8 399.5M261.0 399.7L563.8 231.1" stroke="#f0f1f8" stroke-width="0.92" fill="none"/></g><g opacity="0.04"><path d="M261.0 229.2L563.8 397.2M261.0 397.4L563.8 229.4" stroke="#f0f1f8" stroke-width="0.92" fill="none"/></g><g opacity="0.03"><path d="M261.0 227.5L563.8 395.0M261.0 395.2L563.8 227.7" stroke="#f0f1f8" stroke-width="0.92" fill="none"/></g><path d="M261.0 737.2L563.8 1066.5" stroke="#fff" stroke-opacity="0.9" stroke-width="2.10" fill="none"/><path d="M261.0 1067.0L563.8 737.6" stroke="#fff" stroke-opacity="0.9" stroke-width="2.10" fill="none"/><path d="M261.0 495.9L563.8 748.6" stroke="#fff" stroke-opacity="0.9" stroke-width="1.95" fill="none"/><path d="M261.0 749.0L563.8 496.2" stroke="#fff" stroke-opacity="0.9" stroke-width="1.95" fill="none"/><path d="M261.0 243.2L563.8 415.7" stroke="#fff" stroke-opacity="0.42" stroke-width="2.20" fill="none" filter="url(#bl)"/><path d="M261.0 415.9L563.8 243.4" stroke="#fff" stroke-opacity="0.42" stroke-width="2.20" fill="none" filter="url(#bl)"/><path d="M261.0 168.7L563.8 317.6" stroke="#fff" stroke-opacity="0.42" stroke-width="2.20" fill="none" filter="url(#bl)"/><path d="M261.0 317.8L563.8 168.9" stroke="#fff" stroke-opacity="0.42" stroke-width="2.20" fill="none" filter="url(#bl)"/><path d="M261.0 112.3L563.8 243.2" stroke="#fff" stroke-opacity="0.42" stroke-width="2.20" fill="none" filter="url(#bl)"/><path d="M261.0 243.4L563.8 112.4" stroke="#fff" stroke-opacity="0.42" stroke-width="2.20" fill="none" filter="url(#bl)"/><path d="M261.0 67.9L563.8 184.8" stroke="#fff" stroke-opacity="0.42" stroke-width="2.20" fill="none" filter="url(#bl)"/><path d="M261.0 184.9L563.8 68.1" stroke="#fff" stroke-opacity="0.42" stroke-width="2.20" fill="none" filter="url(#bl)"/><path d="M261.0 32.2L563.8 137.7" stroke="#fff" stroke-opacity="0.42" stroke-width="2.20" fill="none" filter="url(#bl)"/><path d="M261.0 137.8L563.8 32.3" stroke="#fff" stroke-opacity="0.42" stroke-width="2.20" fill="none" filter="url(#bl)"/><path d="M261.0 2.8L563.8 99.0" stroke="#fff" stroke-opacity="0.42" stroke-width="2.20" fill="none" filter="url(#bl)"/><path d="M261.0 99.1L563.8 2.9" stroke="#fff" stroke-opacity="0.42" stroke-width="2.20" fill="none" filter="url(#bl)"/><path d="M261.0 345.7L563.8 550.7" stroke="#ff6a50" stroke-width="1.7" fill="none"/><path d="M261.0 551.0L563.8 345.9" stroke="#6a3cf0" stroke-width="1.7" fill="none"/><path d="M412.6 145.0V330.3" stroke="#78d26c" stroke-width="1.6" fill="none"/><path d="M412.6 625.4V794.8" stroke="#6adf4a" stroke-width="1.7" stroke-dasharray="7 3" fill="none"/><path fill="#fb7a60" d="M412.7 330.3L422.8 336.1L412.7 342.1L402.6 336.2ZM412.7 342.1L422.9 348.1L412.7 354.3L402.5 348.2ZM412.7 354.3L423.0 360.5L412.7 366.8L402.3 360.6ZM412.7 366.8L423.2 373.2L412.7 379.8L402.2 373.3ZM412.7 379.8L423.3 386.3L412.7 393.1L402.0 386.4ZM412.7 393.1L423.5 399.9L412.7 406.8L401.8 399.9ZM412.7 406.8L423.7 413.8L412.6 421.0L401.7 413.9ZM412.6 421.0L423.8 428.2L412.6 435.6L401.5 428.2ZM412.6 435.6L424.0 443.0L412.6 450.7L401.3 443.1ZM412.6 450.7L424.2 458.4L412.6 466.2L401.1 458.4ZM412.6 466.2L424.4 474.2L412.6 482.3L400.9 474.2ZM412.6 482.3L424.5 490.6L412.6 499.0L400.7 490.6Z"/><path fill="#fb74f0" d="M402.6 336.2L412.7 342.1L402.5 348.2L392.4 342.2ZM402.5 348.2L412.7 354.3L402.3 360.6L392.1 354.4ZM402.3 360.6L412.7 366.8L402.2 373.3L391.8 366.9ZM402.2 373.3L412.7 379.8L402.0 386.4L391.5 379.8ZM402.0 386.4L412.7 393.1L401.8 399.9L391.2 393.1ZM401.8 399.9L412.7 406.8L401.7 413.9L390.8 406.9ZM401.7 413.9L412.6 421.0L401.5 428.2L390.5 421.0ZM401.5 428.2L412.6 435.6L401.3 443.1L390.1 435.6ZM401.3 443.1L412.6 450.7L401.1 458.4L389.7 450.7ZM401.1 458.4L412.6 466.2L400.9 474.2L389.4 466.3ZM400.9 474.2L412.6 482.3L400.7 490.6L389.0 482.4Z"/><path fill="#c45be7" d="M392.4 342.2L402.5 348.2L392.1 354.4L382.1 348.3ZM392.1 354.4L402.3 360.6L391.8 366.9L381.6 360.7ZM391.8 366.9L402.2 373.3L391.5 379.8L381.2 373.4ZM391.5 379.8L402.0 386.4L391.2 393.1L380.7 386.5ZM391.2 393.1L401.8 399.9L390.8 406.9L380.2 400.0ZM390.8 406.9L401.7 413.9L390.5 421.0L379.7 413.9ZM390.5 421.0L401.5 428.2L390.1 435.6L379.1 428.3ZM390.1 435.6L401.3 443.1L389.7 450.7L378.6 443.1ZM389.7 450.7L401.1 458.4L389.4 466.3L378.0 458.4ZM389.4 466.3L400.9 474.2L389.0 482.4L377.4 474.3Z"/><path fill="#5f5fe7" d="M382.1 348.3L392.1 354.4L381.6 360.7L371.6 354.5ZM381.6 360.7L391.8 366.9L381.2 373.4L371.0 367.0ZM381.2 373.4L391.5 379.8L380.7 386.5L370.4 379.9ZM380.7 386.5L391.2 393.1L380.2 400.0L369.7 393.2ZM380.2 400.0L390.8 406.9L379.7 413.9L369.0 406.9ZM379.7 413.9L390.5 421.0L379.1 428.3L368.3 421.1ZM379.1 428.3L390.1 435.6L378.6 443.1L367.6 435.7ZM378.6 443.1L389.7 450.7L378.0 458.4L366.9 450.8ZM378.0 458.4L389.4 466.3L377.4 474.3L366.1 466.3Z"/><path fill="#cef8ea" d="M371.6 354.5L381.6 360.7L371.0 367.0L361.0 360.7ZM371.0 367.0L381.2 373.4L370.4 379.9L360.2 373.5ZM370.4 379.9L380.7 386.5L369.7 393.2L359.4 386.6ZM369.7 393.2L380.2 400.0L369.0 406.9L358.6 400.1ZM369.0 406.9L379.7 413.9L368.3 421.1L357.7 414.0ZM368.3 421.1L379.1 428.3L367.6 435.7L356.8 428.4ZM367.6 435.7L378.6 443.1L366.9 450.8L355.9 443.2ZM366.9 450.8L378.0 458.4L366.1 466.3L355.0 458.5Z"/><path fill="#c0ea85" d="M361.0 360.7L371.0 367.0L360.2 373.5L350.2 367.1ZM360.2 373.5L370.4 379.9L359.4 386.6L349.2 380.0ZM359.4 386.6L369.7 393.2L358.6 400.1L348.2 393.3ZM358.6 400.1L369.0 406.9L357.7 414.0L347.2 407.0ZM357.7 414.0L368.3 421.1L356.8 428.4L346.2 421.1ZM356.8 428.4L367.6 435.7L355.9 443.2L345.1 435.7ZM355.9 443.2L366.9 450.8L355.0 458.5L344.0 450.8Z"/><path fill="#f2efa1" d="M350.2 367.1L360.2 373.5L349.2 380.0L339.2 373.5ZM349.2 380.0L359.4 386.6L348.2 393.3L338.1 386.6ZM348.2 393.3L358.6 400.1L347.2 407.0L336.9 400.1ZM347.2 407.0L357.7 414.0L346.2 421.1L335.8 414.0ZM346.2 421.1L356.8 428.4L345.1 435.7L334.5 428.4ZM345.1 435.7L355.9 443.2L344.0 450.8L333.3 443.2Z"/><path fill="#faa747" d="M339.2 373.5L349.2 380.0L338.1 386.6L328.1 380.1ZM338.1 386.6L348.2 393.3L336.9 400.1L326.8 393.4ZM336.9 400.1L347.2 407.0L335.8 414.0L325.5 407.1ZM335.8 414.0L346.2 421.1L334.5 428.4L324.1 421.2ZM334.5 428.4L345.1 435.7L333.3 443.2L322.7 435.8Z"/><path fill="#fb7d6a" d="M328.1 380.1L338.1 386.6L326.8 393.4L316.8 386.7ZM326.8 393.4L336.9 400.1L325.5 407.1L315.4 400.2ZM325.5 407.1L335.8 414.0L324.1 421.2L313.8 414.1ZM324.1 421.2L334.5 428.4L322.7 435.8L312.3 428.5Z"/><path fill="#fb60a0" d="M316.8 386.7L326.8 393.4L315.4 400.2L305.4 393.4ZM315.4 400.2L325.5 407.1L313.8 414.1L303.7 407.1ZM313.8 414.1L324.1 421.2L312.3 428.5L302.0 421.3Z"/><path fill="#fb74e9" d="M305.4 393.4L315.4 400.2L303.7 407.1L293.8 400.3ZM303.7 407.1L313.8 414.1L302.0 421.3L291.9 414.2Z"/><path fill="#ef38ef" d="M293.8 400.3L303.7 407.1L291.9 414.2L282.0 407.2Z"/><path fill="#fbc05b" d="M422.8 336.1L433.0 342.0L422.9 348.1L412.7 342.1ZM422.9 348.1L433.3 354.2L423.0 360.5L412.7 354.3ZM423.0 360.5L433.5 366.8L423.2 373.2L412.7 366.8ZM423.2 373.2L433.9 379.7L423.3 386.3L412.7 379.8ZM423.3 386.3L434.2 393.0L423.5 399.9L412.7 393.1ZM423.5 399.9L434.5 406.7L423.7 413.8L412.7 406.8ZM423.7 413.8L434.8 420.9L423.8 428.2L412.6 421.0ZM423.8 428.2L435.2 435.5L424.0 443.0L412.6 435.6ZM424.0 443.0L435.5 450.6L424.2 458.4L412.6 450.7ZM424.2 458.4L435.9 466.2L424.4 474.2L412.6 466.2ZM424.4 474.2L436.3 482.3L424.5 490.6L412.6 482.3Z"/><path fill="#d9ee9b" d="M433.0 342.0L443.3 348.0L433.3 354.2L422.9 348.1ZM433.3 354.2L443.8 360.4L433.5 366.8L423.0 360.5ZM433.5 366.8L444.2 373.1L433.9 379.7L423.2 373.2ZM433.9 379.7L444.7 386.3L434.2 393.0L423.3 386.3ZM434.2 393.0L445.2 399.8L434.5 406.7L423.5 399.9ZM434.5 406.7L445.7 413.7L434.8 420.9L423.7 413.8ZM434.8 420.9L446.2 428.1L435.2 435.5L423.8 428.2ZM435.2 435.5L446.7 443.0L435.5 450.6L424.0 443.0ZM435.5 450.6L447.3 458.3L435.9 466.2L424.2 458.4ZM435.9 466.2L447.8 474.2L436.3 482.3L424.4 474.2Z"/><path fill="#bdf4d0" d="M443.3 348.0L453.8 354.1L443.8 360.4L433.3 354.2ZM443.8 360.4L454.4 366.7L444.2 373.1L433.5 366.8ZM444.2 373.1L455.1 379.6L444.7 386.3L433.9 379.7ZM444.7 386.3L455.7 392.9L445.2 399.8L434.2 393.0ZM445.2 399.8L456.4 406.7L445.7 413.7L434.5 406.7ZM445.7 413.7L457.0 420.8L446.2 428.1L434.8 420.9ZM446.2 428.1L457.7 435.5L446.7 443.0L435.2 435.5ZM446.7 443.0L458.5 450.6L447.3 458.3L435.5 450.6ZM447.3 458.3L459.2 466.1L447.8 474.2L435.9 466.2Z"/><path fill="#97c1fc" d="M453.8 354.1L464.5 360.3L454.4 366.7L443.8 360.4ZM454.4 366.7L465.3 373.1L455.1 379.6L444.2 373.1ZM455.1 379.6L466.1 386.2L455.7 392.9L444.7 386.3ZM455.7 392.9L466.9 399.7L456.4 406.7L445.2 399.8ZM456.4 406.7L467.7 413.7L457.0 420.8L445.7 413.7ZM457.0 420.8L468.6 428.1L457.7 435.5L446.2 428.1ZM457.7 435.5L469.5 442.9L458.5 450.6L446.7 443.0ZM458.5 450.6L470.4 458.3L459.2 466.1L447.3 458.3Z"/><path fill="#5656e6" d="M464.5 360.3L475.3 366.6L465.3 373.1L454.4 366.7ZM465.3 373.1L476.3 379.5L466.1 386.2L455.1 379.6ZM466.1 386.2L477.2 392.9L466.9 399.7L455.7 392.9ZM466.9 399.7L478.2 406.6L467.7 413.7L456.4 406.7ZM467.7 413.7L479.3 420.8L468.6 428.1L457.0 420.8ZM468.6 428.1L480.3 435.4L469.5 442.9L457.7 435.5ZM469.5 442.9L481.4 450.5L470.4 458.3L458.5 450.6Z"/><path fill="#a553df" d="M475.3 366.6L486.3 373.0L476.3 379.5L465.3 373.1ZM476.3 379.5L487.5 386.1L477.2 392.9L466.1 386.2ZM477.2 392.9L488.6 399.6L478.2 406.6L466.9 399.7ZM478.2 406.6L489.8 413.6L479.3 420.8L467.7 413.7ZM479.3 420.8L491.0 428.0L480.3 435.4L468.6 428.1ZM480.3 435.4L492.3 442.9L481.4 450.5L469.5 442.9Z"/><path fill="#ec4bde" d="M486.3 373.0L497.5 379.5L487.5 386.1L476.3 379.5ZM487.5 386.1L498.8 392.8L488.6 399.6L477.2 392.9ZM488.6 399.6L500.1 406.5L489.8 413.6L478.2 406.6ZM489.8 413.6L501.5 420.7L491.0 428.0L479.3 420.8ZM491.0 428.0L502.9 435.3L492.3 442.9L480.3 435.4Z"/><path fill="#fc7ec1" d="M497.5 379.5L508.9 386.0L498.8 392.8L487.5 386.1ZM498.8 392.8L510.3 399.6L500.1 406.5L488.6 399.6ZM500.1 406.5L511.9 413.5L501.5 420.7L489.8 413.6ZM501.5 420.7L513.4 427.9L502.9 435.3L491.0 428.0Z"/><path fill="#fb6c56" d="M508.9 386.0L520.4 392.7L510.3 399.6L498.8 392.8ZM510.3 399.6L522.1 406.5L511.9 413.5L500.1 406.5ZM511.9 413.5L523.8 420.6L513.4 427.9L501.5 420.7Z"/><path fill="#fbb360" d="M520.4 392.7L532.1 399.5L522.1 406.5L510.3 399.6ZM522.1 406.5L534.0 413.5L523.8 420.6L511.9 413.5Z"/><path fill="#fbe660" d="M532.1 399.5L544.0 406.4L534.0 413.5L522.1 406.5Z"/><path fill="#d71dd7" d="M282.0 407.2L291.5 413.9L293.1 425.4L283.6 418.7ZM293.1 425.4L302.7 432.3L304.1 443.6L294.6 436.6ZM304.1 443.6L313.9 450.7L315.1 461.7L305.5 454.6ZM315.1 461.7L325.0 469.0L326.1 479.7L316.3 472.4ZM326.1 479.7L336.1 487.2L337.0 497.7L327.2 490.2ZM337.0 497.7L347.1 505.4L347.9 515.7L338.0 508.0ZM347.9 515.7L358.1 523.6L358.8 533.6L348.8 525.7ZM358.8 533.6L369.1 541.7L369.7 551.5L359.5 543.4ZM369.7 551.5L380.1 559.7L380.5 569.3L370.2 561.0ZM380.5 569.3L391.0 577.7L391.3 587.0L380.9 578.6ZM391.3 587.0L401.9 595.6L402.1 604.7L391.6 596.1ZM402.1 604.7L412.8 613.5L412.8 622.4L402.2 613.6Z"/><path fill="#c11ac1" d="M283.6 418.7L293.1 425.4L294.6 436.6L285.2 429.8ZM295.3 501.1L304.0 508.1L305.3 517.3L296.7 510.4ZM294.6 436.6L304.1 443.6L305.5 454.6L296.0 447.6ZM305.3 517.3L314.1 524.5L315.2 533.6L306.5 526.4ZM305.5 454.6L315.1 461.7L316.3 472.4L306.8 465.3ZM315.2 533.6L324.1 540.8L325.1 549.7L316.3 542.4ZM316.3 472.4L326.1 479.7L327.2 490.2L317.5 482.9ZM327.2 490.2L337.0 497.7L338.0 508.0L328.2 500.5ZM338.0 508.0L347.9 515.7L348.8 525.7L338.9 518.0ZM348.8 525.7L358.8 533.6L359.5 543.4L349.5 535.5ZM359.5 543.4L369.7 551.5L370.2 561.0L360.2 553.0ZM370.2 561.0L380.5 569.3L380.9 578.6L370.8 570.4ZM380.9 578.6L391.3 587.0L391.6 596.1L381.3 587.7ZM391.6 596.1L402.1 604.7L402.2 613.6L391.8 605.0Z"/><path fill="#6b1dd7" d="M285.2 429.8L294.6 436.6L296.0 447.6L286.8 440.8ZM296.7 510.4L305.3 517.3L306.5 526.4L297.9 519.4ZM296.0 447.6L305.5 454.6L306.8 465.3L297.4 458.3ZM306.5 526.4L315.2 533.6L316.3 542.4L307.7 535.3ZM306.8 465.3L316.3 472.4L317.5 482.9L308.1 475.7ZM317.5 482.9L327.2 490.2L328.2 500.5L318.7 493.1ZM328.2 500.5L338.0 508.0L338.9 518.0L329.2 510.5ZM338.9 518.0L348.8 525.7L349.5 535.5L339.8 527.8ZM349.5 535.5L359.5 543.4L360.2 553.0L350.3 545.1ZM360.2 553.0L370.2 561.0L370.8 570.4L360.8 562.3ZM370.8 570.4L380.9 578.6L381.3 587.7L371.3 579.5ZM381.3 587.7L391.6 596.1L391.8 605.0L381.7 596.6Z"/><path fill="#1a28c1" d="M286.8 440.8L296.0 447.6L297.4 458.3L288.3 451.4ZM297.9 519.4L306.5 526.4L307.7 535.3L299.2 528.3ZM297.4 458.3L306.8 465.3L308.1 475.7L298.8 468.7ZM308.1 475.7L317.5 482.9L318.7 493.1L309.3 485.9ZM318.7 493.1L328.2 500.5L329.2 510.5L319.8 503.1ZM329.2 510.5L338.9 518.0L339.8 527.8L330.2 520.3ZM339.8 527.8L349.5 535.5L350.3 545.1L340.7 537.4ZM350.3 545.1L360.2 553.0L360.8 562.3L351.1 554.4ZM360.8 562.3L370.8 570.4L371.3 579.5L361.4 571.4ZM371.3 579.5L381.3 587.7L381.7 596.6L371.8 588.4Z"/><path fill="#1bc5c0" d="M288.3 451.4L297.4 458.3L298.8 468.7L289.8 461.8ZM298.8 468.7L308.1 475.7L309.3 485.9L300.2 478.9ZM309.3 485.9L318.7 493.1L319.8 503.1L310.5 495.9ZM319.8 503.1L329.2 510.5L330.2 520.3L320.9 512.9ZM330.2 520.3L339.8 527.8L340.7 537.4L331.2 529.8ZM340.7 537.4L350.3 545.1L351.1 554.4L341.5 546.7ZM351.1 554.4L360.8 562.3L361.4 571.4L351.8 563.6ZM361.4 571.4L371.3 579.5L371.8 588.4L362.0 580.4Z"/><path fill="#18af24" d="M289.8 461.8L298.8 468.7L300.2 478.9L291.2 472.0ZM300.2 478.9L309.3 485.9L310.5 495.9L301.5 488.8ZM310.5 495.9L319.8 503.1L320.9 512.9L311.7 505.6ZM320.9 512.9L330.2 520.3L331.2 529.8L322.0 522.4ZM331.2 529.8L340.7 537.4L341.5 546.7L332.2 539.1ZM341.5 546.7L351.1 554.4L351.8 563.6L342.4 555.8ZM351.8 563.6L361.4 571.4L362.0 580.4L352.5 572.5Z"/><path fill="#8dc51b" d="M291.2 472.0L300.2 478.9L301.5 488.8L292.6 481.9ZM301.5 488.8L310.5 495.9L311.7 505.6L302.8 498.6ZM311.7 505.6L320.9 512.9L322.0 522.4L312.9 515.2ZM322.0 522.4L331.2 529.8L332.2 539.1L323.0 531.7ZM332.2 539.1L341.5 546.7L342.4 555.8L333.1 548.2ZM342.4 555.8L351.8 563.6L352.5 572.5L343.2 564.7Z"/><path fill="#c16e1a" d="M292.6 481.9L301.5 488.8L302.8 498.6L294.0 491.6ZM302.8 498.6L311.7 505.6L312.9 515.2L304.0 508.1ZM312.9 515.2L322.0 522.4L323.0 531.7L314.1 524.5ZM323.0 531.7L332.2 539.1L333.1 548.2L324.1 540.8ZM333.1 548.2L342.4 555.8L343.2 564.7L334.0 557.2Z"/><path fill="#d71d24" d="M294.0 491.6L302.8 498.6L304.0 508.1L295.3 501.1ZM304.0 508.1L312.9 515.2L314.1 524.5L305.3 517.3ZM314.1 524.5L323.0 531.7L324.1 540.8L315.2 533.6ZM324.1 540.8L333.1 548.2L334.0 557.2L325.1 549.7Z"/><path fill="#c1601a" d="M291.5 413.9L301.3 420.8L302.7 432.3L293.1 425.4ZM302.7 432.3L312.6 439.4L313.9 450.7L304.1 443.6ZM313.9 450.7L323.9 457.9L325.0 469.0L315.1 461.7ZM325.0 469.0L335.1 476.4L336.1 487.2L326.1 479.7ZM336.1 487.2L346.3 494.9L347.1 505.4L337.0 497.7ZM347.1 505.4L357.4 513.3L358.1 523.6L347.9 515.7ZM358.1 523.6L368.6 531.6L369.1 541.7L358.8 533.6ZM369.1 541.7L379.7 549.9L380.1 559.7L369.7 551.5ZM380.1 559.7L390.7 568.1L391.0 577.7L380.5 569.3ZM391.0 577.7L401.8 586.3L401.9 595.6L391.3 587.0ZM401.9 595.6L412.8 604.4L412.8 613.5L402.1 604.7Z"/><path fill="#70c51b" d="M301.3 420.8L311.3 427.8L312.6 439.4L302.7 432.3ZM312.6 439.4L322.7 446.6L323.9 457.9L313.9 450.7ZM323.9 457.9L334.1 465.3L335.1 476.4L325.0 469.0ZM335.1 476.4L345.4 484.0L346.3 494.9L336.1 487.2ZM346.3 494.9L356.7 502.7L357.4 513.3L347.1 505.4ZM357.4 513.3L368.0 521.3L368.6 531.6L358.1 523.6ZM368.6 531.6L379.2 539.8L379.7 549.9L369.1 541.7ZM379.7 549.9L390.4 558.3L390.7 568.1L380.1 559.7ZM390.7 568.1L401.6 576.7L401.8 586.3L391.0 577.7ZM401.8 586.3L412.8 595.1L412.8 604.4L401.9 595.6Z"/><path fill="#18af63" d="M311.3 427.8L321.5 435.0L322.7 446.6L312.6 439.4ZM322.7 446.6L333.0 454.0L334.1 465.3L323.9 457.9ZM334.1 465.3L344.5 472.9L345.4 484.0L335.1 476.4ZM345.4 484.0L356.0 491.8L356.7 502.7L346.3 494.9ZM356.7 502.7L367.4 510.7L368.0 521.3L357.4 513.3ZM368.0 521.3L378.8 529.5L379.2 539.8L368.6 531.6ZM379.2 539.8L390.1 548.2L390.4 558.3L379.7 549.9ZM390.4 558.3L401.5 566.9L401.6 576.7L390.7 568.1ZM401.6 576.7L412.7 585.5L412.8 595.1L401.8 586.3Z"/><path fill="#1d5bd7" d="M321.5 435.0L331.9 442.3L333.0 454.0L322.7 446.6ZM333.0 454.0L343.6 461.5L344.5 472.9L334.1 465.3ZM344.5 472.9L355.2 480.7L356.0 491.8L345.4 484.0ZM356.0 491.8L366.8 499.8L367.4 510.7L356.7 502.7ZM367.4 510.7L378.3 518.9L378.8 529.5L368.0 521.3ZM378.8 529.5L389.8 537.9L390.1 548.2L379.2 539.8ZM390.1 548.2L401.3 556.8L401.5 566.9L390.4 558.3ZM401.5 566.9L412.7 575.7L412.7 585.5L401.6 576.7Z"/><path fill="#6e1ac1" d="M331.9 442.3L342.7 449.8L343.6 461.5L333.0 454.0ZM343.6 461.5L354.4 469.3L355.2 480.7L344.5 472.9ZM355.2 480.7L366.1 488.7L366.8 499.8L356.0 491.8ZM366.8 499.8L377.8 508.0L378.3 518.9L367.4 510.7ZM378.3 518.9L389.5 527.2L389.8 537.9L378.8 529.5ZM389.8 537.9L401.1 546.5L401.3 556.8L390.1 548.2ZM401.3 556.8L412.7 565.6L412.7 575.7L401.5 566.9Z"/><path fill="#d71dc8" d="M342.7 449.8L353.6 457.5L354.4 469.3L343.6 461.5ZM354.4 469.3L365.5 477.2L366.1 488.7L355.2 480.7ZM366.1 488.7L377.4 496.8L377.8 508.0L366.8 499.8ZM377.8 508.0L389.2 516.3L389.5 527.2L378.3 518.9ZM389.5 527.2L400.9 535.8L401.1 546.5L389.8 537.9ZM401.1 546.5L412.7 555.3L412.7 565.6L401.3 556.8Z"/><path fill="#c11a28" d="M353.6 457.5L364.8 465.4L365.5 477.2L354.4 469.3ZM365.5 477.2L376.8 485.3L377.4 496.8L366.1 488.7ZM377.4 496.8L388.8 505.1L389.2 516.3L377.8 508.0ZM389.2 516.3L400.8 524.9L400.9 535.8L389.5 527.2ZM400.9 535.8L412.7 544.6L412.7 555.3L401.1 546.5Z"/><path fill="#d7741d" d="M364.8 465.4L376.3 473.5L376.8 485.3L365.5 477.2ZM376.8 485.3L388.5 493.6L388.8 505.1L377.4 496.8ZM388.8 505.1L400.6 513.7L400.8 524.9L389.2 516.3ZM400.8 524.9L412.7 533.7L412.7 544.6L400.9 535.8Z"/><path fill="#70af18" d="M376.3 473.5L388.1 481.8L388.5 493.6L376.8 485.3ZM388.5 493.6L400.4 502.2L400.6 513.7L388.8 505.1ZM400.6 513.7L412.6 522.4L412.7 533.7L400.8 524.9Z"/><path fill="#1bc570" d="M388.1 481.8L400.2 490.3L400.4 502.2L388.5 493.6ZM400.4 502.2L412.6 510.9L412.6 522.4L400.6 513.7Z"/><path fill="#1a60c1" d="M400.2 490.3L412.6 499.0L412.6 510.9L400.4 502.2Z"/><path fill="#ddf6cb" d="M412.6 499.0L425.5 489.9L425.3 502.2L412.6 511.3ZM412.7 586.5L424.1 577.3L423.9 586.7L412.8 595.9ZM435.7 548.6L446.7 539.9L446.2 549.9L435.4 558.6ZM458.8 510.4L469.5 502.3L468.7 512.9L458.1 521.1ZM482.0 472.1L492.4 464.5L491.2 475.7L480.9 483.4ZM474.3 553.4L483.6 545.5L482.7 554.4L473.4 562.2ZM505.4 433.6L515.4 426.5L513.9 438.4L503.9 445.5ZM495.0 519.4L504.0 512.0L502.8 521.3L493.8 528.8ZM515.7 485.3L524.6 478.3L523.0 488.2L514.3 495.2Z"/><path fill="#f6fa99" d="M412.6 511.3L425.3 502.2L425.1 514.0L412.6 523.2ZM412.8 595.9L423.9 586.7L423.7 595.8L412.8 605.0ZM435.4 558.6L446.2 549.9L445.7 559.6L435.0 568.3ZM458.1 521.1L468.7 512.9L467.8 523.2L457.4 531.4ZM480.9 483.4L491.2 475.7L490.0 486.6L479.9 494.3ZM473.4 562.2L482.7 554.4L481.7 563.0L472.6 570.9ZM503.9 445.5L513.9 438.4L512.3 449.9L502.5 457.1ZM493.8 528.8L502.8 521.3L501.6 530.4L492.7 537.9ZM514.3 495.2L523.0 488.2L521.5 497.7L512.9 504.8Z"/><path fill="#fcc288" d="M412.6 523.2L425.1 514.0L424.9 525.4L412.7 534.6ZM412.8 605.0L423.7 595.8L423.6 604.6L412.8 613.8ZM438.0 481.1L450.1 472.5L449.5 484.7L437.6 493.3ZM435.0 568.3L445.7 559.6L445.2 569.0L434.7 577.7ZM457.4 531.4L467.8 523.2L467.0 533.2L456.8 541.4ZM479.9 494.3L490.0 486.6L488.9 497.2L478.9 504.9ZM502.5 457.1L512.3 449.9L510.8 461.0L501.2 468.3ZM492.7 537.9L501.6 530.4L500.4 539.3L491.6 546.8ZM525.2 419.6L534.7 412.9L532.9 424.6L523.5 431.4ZM512.9 504.8L521.5 497.7L520.1 507.0L511.5 514.1Z"/><path fill="#fc79bf" d="M412.7 534.6L424.9 525.4L424.7 536.5L412.7 545.7ZM412.8 613.8L423.6 604.6L423.4 613.2L412.8 622.4ZM437.6 493.3L449.5 484.7L448.9 496.5L437.2 505.1ZM434.7 577.7L445.2 569.0L444.8 578.1L434.4 586.8ZM456.8 541.4L467.0 533.2L466.2 542.8L456.1 551.1ZM478.9 504.9L488.9 497.2L487.8 507.4L477.9 515.2ZM501.2 468.3L510.8 461.0L509.4 471.8L499.8 479.1ZM491.6 546.8L500.4 539.3L499.3 547.9L490.6 555.4ZM523.5 431.4L532.9 424.6L531.1 436.0L521.9 442.8ZM511.5 514.1L520.1 507.0L518.7 516.1L510.2 523.2Z"/><path fill="#f764e8" d="M412.7 545.7L424.7 536.5L424.6 547.2L412.7 556.4ZM437.2 505.1L448.9 496.5L448.4 507.9L436.8 516.5ZM434.4 586.8L444.8 578.1L444.3 587.0L434.1 595.7ZM461.9 464.3L473.2 456.3L472.3 468.3L461.1 476.4ZM456.1 551.1L466.2 542.8L465.5 552.3L455.5 560.5ZM477.9 515.2L487.8 507.4L486.7 517.4L477.0 525.1ZM499.8 479.1L509.4 471.8L508.0 482.3L498.6 489.6ZM521.9 442.8L531.1 436.0L529.4 447.1L520.3 453.9ZM510.2 523.2L518.7 516.1L517.3 524.9L508.9 532.0Z"/><path fill="#af5ae7" d="M412.7 556.4L424.6 547.2L424.4 557.5L412.7 566.8ZM436.8 516.5L448.4 507.9L447.8 518.9L436.4 527.5ZM434.1 595.7L444.3 587.0L443.9 595.6L433.8 604.3ZM461.1 476.4L472.3 468.3L471.3 480.0L460.3 488.1ZM455.5 560.5L465.5 552.3L464.7 561.4L454.9 569.6ZM477.0 525.1L486.7 517.4L485.6 527.0L476.1 534.8ZM498.6 489.6L508.0 482.3L506.6 492.5L497.3 499.8ZM520.3 453.9L529.4 447.1L527.8 457.8L518.7 464.7ZM508.9 532.0L517.3 524.9L515.9 533.5L507.7 540.6Z"/><path fill="#babaf7" d="M412.7 566.8L424.4 557.5L424.2 567.5L412.7 576.8ZM436.4 527.5L447.8 518.9L447.2 529.5L436.1 538.2ZM460.3 488.1L471.3 480.0L470.4 491.3L459.5 499.5ZM454.9 569.6L464.7 561.4L464.0 570.3L454.3 578.5ZM484.3 448.5L495.0 441.0L493.7 452.9L483.1 460.5ZM476.1 534.8L485.6 527.0L484.6 536.4L475.2 544.2ZM497.3 499.8L506.6 492.5L505.3 502.4L496.1 509.8ZM518.7 464.7L527.8 457.8L526.1 468.2L517.2 475.1Z"/><path fill="#cbeffb" d="M412.7 576.8L424.2 567.5L424.1 577.3L412.7 586.5ZM436.1 538.2L447.2 529.5L446.7 539.9L435.7 548.6ZM459.5 499.5L470.4 491.3L469.5 502.3L458.8 510.4ZM454.3 578.5L464.0 570.3L463.3 578.9L453.7 587.2ZM483.1 460.5L493.7 452.9L492.4 464.5L482.0 472.1ZM475.2 544.2L484.6 536.4L483.6 545.5L474.3 553.4ZM496.1 509.8L505.3 502.4L504.0 512.0L495.0 519.4ZM517.2 475.1L526.1 468.2L524.6 478.3L515.7 485.3Z"/><path fill="#f8faa8" d="M425.5 489.9L438.0 481.1L437.6 493.3L425.3 502.2ZM424.1 577.3L435.0 568.3L434.7 577.7L423.9 586.7ZM446.7 539.9L457.4 531.4L456.8 541.4L446.2 549.9ZM469.5 502.3L479.9 494.3L478.9 504.9L468.7 512.9ZM492.4 464.5L502.5 457.1L501.2 468.3L491.2 475.7ZM483.6 545.5L492.7 537.9L491.6 546.8L482.7 554.4ZM515.4 426.5L525.2 419.6L523.5 431.4L513.9 438.4ZM504.0 512.0L512.9 504.8L511.5 514.1L502.8 521.3ZM524.6 478.3L533.2 471.5L531.5 481.3L523.0 488.2Z"/><path fill="#fcba79" d="M425.3 502.2L437.6 493.3L437.2 505.1L425.1 514.0ZM423.9 586.7L434.7 577.7L434.4 586.8L423.7 595.8ZM446.2 549.9L456.8 541.4L456.1 551.1L445.7 559.6ZM468.7 512.9L478.9 504.9L477.9 515.2L467.8 523.2ZM491.2 475.7L501.2 468.3L499.8 479.1L490.0 486.6ZM482.7 554.4L491.6 546.8L490.6 555.4L481.7 563.0ZM513.9 438.4L523.5 431.4L521.9 442.8L512.3 449.9ZM502.8 521.3L511.5 514.1L510.2 523.2L501.6 530.4ZM523.0 488.2L531.5 481.3L529.9 490.9L521.5 497.7Z"/><path fill="#fc88c6" d="M425.1 514.0L437.2 505.1L436.8 516.5L424.9 525.4ZM423.7 595.8L434.4 586.8L434.1 595.7L423.6 604.6ZM450.1 472.5L461.9 464.3L461.1 476.4L449.5 484.7ZM445.7 559.6L456.1 551.1L455.5 560.5L445.2 569.0ZM467.8 523.2L477.9 515.2L477.0 525.1L467.0 533.2ZM490.0 486.6L499.8 479.1L498.6 489.6L488.9 497.2ZM512.3 449.9L521.9 442.8L520.3 453.9L510.8 461.0ZM501.6 530.4L510.2 523.2L508.9 532.0L500.4 539.3ZM534.7 412.9L544.0 406.4L542.1 418.1L532.9 424.6ZM521.5 497.7L529.9 490.9L528.4 500.1L520.1 507.0Z"/><path fill="#f655e6" d="M424.9 525.4L436.8 516.5L436.4 527.5L424.7 536.5ZM423.6 604.6L434.1 595.7L433.8 604.3L423.4 613.2ZM449.5 484.7L461.1 476.4L460.3 488.1L448.9 496.5ZM445.2 569.0L455.5 560.5L454.9 569.6L444.8 578.1ZM467.0 533.2L477.0 525.1L476.1 534.8L466.2 542.8ZM488.9 497.2L498.6 489.6L497.3 499.8L487.8 507.4ZM510.8 461.0L520.3 453.9L518.7 464.7L509.4 471.8ZM500.4 539.3L508.9 532.0L507.7 540.6L499.3 547.9ZM532.9 424.6L542.1 418.1L540.2 429.4L531.1 436.0ZM520.1 507.0L528.4 500.1L526.9 509.2L518.7 516.1Z"/><path fill="#b567e9" d="M424.7 536.5L436.4 527.5L436.1 538.2L424.6 547.2ZM448.9 496.5L460.3 488.1L459.5 499.5L448.4 507.9ZM444.8 578.1L454.9 569.6L454.3 578.5L444.3 587.0ZM473.2 456.3L484.3 448.5L483.1 460.5L472.3 468.3ZM466.2 542.8L476.1 534.8L475.2 544.2L465.5 552.3ZM487.8 507.4L497.3 499.8L496.1 509.8L486.7 517.4ZM509.4 471.8L518.7 464.7L517.2 475.1L508.0 482.3ZM531.1 436.0L540.2 429.4L538.3 440.4L529.4 447.1ZM518.7 516.1L526.9 509.2L525.4 518.0L517.3 524.9Z"/><path fill="#acacf6" d="M424.6 547.2L436.1 538.2L435.7 548.6L424.4 557.5ZM448.4 507.9L459.5 499.5L458.8 510.4L447.8 518.9ZM444.3 587.0L454.3 578.5L453.7 587.2L443.9 595.6ZM472.3 468.3L483.1 460.5L482.0 472.1L471.3 480.0ZM465.5 552.3L475.2 544.2L474.3 553.4L464.7 561.4ZM486.7 517.4L496.1 509.8L495.0 519.4L485.6 527.0ZM508.0 482.3L517.2 475.1L515.7 485.3L506.6 492.5ZM529.4 447.1L538.3 440.4L536.6 451.0L527.8 457.8ZM517.3 524.9L525.4 518.0L524.0 526.6L515.9 533.5Z"/><path fill="#d9f3fc" d="M424.4 557.5L435.7 548.6L435.4 558.6L424.2 567.5ZM447.8 518.9L458.8 510.4L458.1 521.1L447.2 529.5ZM471.3 480.0L482.0 472.1L480.9 483.4L470.4 491.3ZM464.7 561.4L474.3 553.4L473.4 562.2L464.0 570.3ZM495.0 441.0L505.4 433.6L503.9 445.5L493.7 452.9ZM485.6 527.0L495.0 519.4L493.8 528.8L484.6 536.4ZM506.6 492.5L515.7 485.3L514.3 495.2L505.3 502.4ZM527.8 457.8L536.6 451.0L534.8 461.4L526.1 468.2Z"/><path fill="#d4f4be" d="M424.2 567.5L435.4 558.6L435.0 568.3L424.1 577.3ZM447.2 529.5L458.1 521.1L457.4 531.4L446.7 539.9ZM470.4 491.3L480.9 483.4L479.9 494.3L469.5 502.3ZM464.0 570.3L473.4 562.2L472.6 570.9L463.3 578.9ZM493.7 452.9L503.9 445.5L502.5 457.1L492.4 464.5ZM484.6 536.4L493.8 528.8L492.7 537.9L483.6 545.5ZM505.3 502.4L514.3 495.2L512.9 504.8L504.0 512.0ZM526.1 468.2L534.8 461.4L533.2 471.5L524.6 478.3Z"/><path d="M412.7 330.3L544.0 406.4L412.6 499.0L282.0 407.2ZM412.7 336.2L533.0 406.4L412.6 490.6L292.9 407.2Z" fill="#10140c" fill-opacity="0.4" fill-rule="evenodd"/><path d="M282.0 407.2L412.6 499.0L412.8 622.4L299.2 528.3ZM287.5 416.3L406.4 500.6L407.4 613.6L302.8 527.4Z" fill="#10140c" fill-opacity="0.4" fill-rule="evenodd"/><path d="M412.6 499.0L544.0 406.4L524.0 526.6L412.8 622.4ZM419.1 500.6L538.5 415.5L520.7 525.8L418.2 613.5Z" fill="#10140c" fill-opacity="0.24" fill-rule="evenodd"/><path d="M412.7 354.3L417.8 357.4L412.7 360.5L407.5 357.4Z" fill="#d4f4a4" fill-opacity="0.9"/><path d="M407.5 357.4L412.7 360.5L407.5 363.7L402.3 360.6Z" fill="#8848e0" fill-opacity="0.9"/><path d="M417.8 357.4L423.0 360.5L417.9 363.7L412.7 360.5Z" fill="#3a2e1e" fill-opacity="1"/><path d="M309.0 447.1L313.9 450.7L314.5 456.2L309.6 452.6Z" fill="#181c14" fill-opacity="1"/><path d="M304.1 443.6L309.0 447.1L309.6 452.6L304.8 449.1Z" fill="#70e050" fill-opacity="0.8"/><path d="M443.1 500.8L448.9 496.5L448.6 502.2L442.9 506.5Z" fill="#3c4030" fill-opacity="1"/><path d="M437.2 505.1L443.1 500.8L442.9 506.5L437.0 510.8Z" fill="#e8ffd0" fill-opacity="0.8"/><path d="M336.9 400.1L342.1 403.6L336.4 407.0L331.2 403.6Z" fill="#d4f4a4" fill-opacity="0.9"/><path d="M331.2 403.6L336.4 407.0L330.6 410.5L325.5 407.1Z" fill="#8848e0" fill-opacity="0.9"/><path d="M342.1 403.6L347.2 407.0L341.5 410.5L336.4 407.0Z" fill="#3a2e1e" fill-opacity="1"/><path d="M317.4 518.8L322.0 522.4L322.5 527.1L318.0 523.4Z" fill="#181c14" fill-opacity="1"/><path d="M312.9 515.2L317.4 518.8L318.0 523.4L313.5 519.8Z" fill="#70e050" fill-opacity="0.8"/><path d="M440.0 573.3L445.2 569.0L445.0 573.6L439.8 577.9Z" fill="#3c4030" fill-opacity="1"/><path d="M434.7 577.7L440.0 573.3L439.8 577.9L434.6 582.3Z" fill="#e8ffd0" fill-opacity="0.8"/><path d="M488.6 399.6L494.3 403.1L489.2 406.6L483.4 403.1Z" fill="#d4f4a4" fill-opacity="0.9"/><path d="M483.4 403.1L489.2 406.6L484.0 410.1L478.2 406.6Z" fill="#8848e0" fill-opacity="0.9"/><path d="M494.3 403.1L500.1 406.5L495.0 410.1L489.2 406.6Z" fill="#3a2e1e" fill-opacity="1"/><path d="M383.1 500.9L388.8 505.1L389.0 510.8L383.3 506.6Z" fill="#181c14" fill-opacity="1"/><path d="M377.4 496.8L383.1 500.9L383.3 506.6L377.6 502.4Z" fill="#70e050" fill-opacity="0.8"/><path d="M517.1 446.3L521.9 442.8L521.1 448.4L516.4 451.9Z" fill="#3c4030" fill-opacity="1"/><path d="M512.3 449.9L517.1 446.3L516.4 451.9L511.6 455.5Z" fill="#e8ffd0" fill-opacity="0.8"/><path d="M412.6 450.7L418.4 454.5L412.6 458.4L406.9 454.5Z" fill="#d4f4a4" fill-opacity="0.9"/><path d="M406.9 454.5L412.6 458.4L406.8 462.3L401.1 458.4Z" fill="#8848e0" fill-opacity="0.9"/><path d="M418.4 454.5L424.2 458.4L418.4 462.3L412.6 458.4Z" fill="#3a2e1e" fill-opacity="1"/><path d="M385.7 573.5L391.0 577.7L391.2 582.4L385.9 578.2Z" fill="#181c14" fill-opacity="1"/><path d="M380.5 569.3L385.7 573.5L385.9 578.2L380.7 574.0Z" fill="#70e050" fill-opacity="0.8"/><path d="M507.2 517.7L511.5 514.1L510.9 518.7L506.6 522.3Z" fill="#3c4030" fill-opacity="1"/><path d="M502.8 521.3L507.2 517.7L506.6 522.3L502.2 525.9Z" fill="#e8ffd0" fill-opacity="0.8"/><path d="M298.7 403.7L303.7 407.1L297.8 410.6L292.9 407.2Z" fill="#b4b4bc" fill-opacity="0.85"/><path d="M320.4 403.6L325.5 407.1L319.7 410.6L314.6 407.1Z" fill="#b4b4bc" fill-opacity="0.85"/><path d="M385.5 403.4L390.8 406.9L385.3 410.4L379.9 406.9Z" fill="#b4b4bc" fill-opacity="0.85"/><path d="M396.4 403.4L401.7 406.8L396.2 410.3L390.8 406.9Z" fill="#b4b4bc" fill-opacity="0.85"/><path d="M418.1 403.3L423.6 406.8L418.1 410.3L412.7 406.8Z" fill="#b4b4bc" fill-opacity="0.85"/><path d="M429.0 403.3L434.5 406.7L429.1 410.2L423.6 406.8Z" fill="#b4b4bc" fill-opacity="0.85"/><path d="M450.7 403.2L456.4 406.7L451.0 410.2L445.4 406.7Z" fill="#b4b4bc" fill-opacity="0.85"/><path d="M505.3 403.0L511.1 406.5L506.0 410.0L500.1 406.5Z" fill="#b4b4bc" fill-opacity="0.85"/><path d="M527.1 403.0L533.0 406.4L528.0 410.0L522.1 406.5Z" fill="#b4b4bc" fill-opacity="0.85"/><path d="M332.6 499.1L337.5 502.9L338.0 508.0L333.1 504.2Z" fill="#a8a8b4" fill-opacity="0.8"/><path d="M463.0 522.1L468.2 518.1L467.8 523.2L462.7 527.3Z" fill="#8c9088" fill-opacity="0.8"/><path d="M337.5 502.9L342.5 506.7L342.9 511.8L338.0 508.0Z" fill="#a8a8b4" fill-opacity="0.8"/><path d="M468.2 518.1L473.4 514.1L472.9 519.2L467.8 523.2Z" fill="#8c9088" fill-opacity="0.8"/><path d="M342.5 506.7L347.5 510.6L347.9 515.7L342.9 511.8Z" fill="#a8a8b4" fill-opacity="0.8"/><path d="M473.4 514.1L478.4 510.1L477.9 515.2L472.9 519.2Z" fill="#8c9088" fill-opacity="0.8"/><path d="M347.5 510.6L352.6 514.5L353.0 519.6L347.9 515.7Z" fill="#a8a8b4" fill-opacity="0.8"/><path d="M478.4 510.1L483.4 506.2L482.9 511.3L477.9 515.2Z" fill="#8c9088" fill-opacity="0.8"/><path d="M352.6 514.5L357.8 518.4L358.1 523.6L353.0 519.6Z" fill="#a8a8b4" fill-opacity="0.8"/><path d="M483.4 506.2L488.3 502.3L487.8 507.4L482.9 511.3Z" fill="#8c9088" fill-opacity="0.8"/><path d="M357.4 513.3L362.7 517.2L363.0 522.4L357.8 518.4Z" fill="#a8a8b4" fill-opacity="0.8"/><path d="M488.9 497.2L493.8 493.4L493.2 498.5L488.3 502.3Z" fill="#8c9088" fill-opacity="0.8"/><path d="M412.7 330.3L544.0 406.4L524.0 526.6L412.8 622.4L299.2 528.3L282.0 407.2ZM282.0 407.2L412.6 499.0L544.0 406.4M412.6 499.0L412.8 622.4" stroke="#fff" stroke-opacity="0.85" stroke-width="1.7" fill="none" stroke-linejoin="round"/><path d="M282.0 407.2L412.8 622.4M544.0 406.4L412.8 622.4M412.7 330.3L412.6 499.0" stroke="#fff" stroke-opacity="0.8" stroke-width="1.2" fill="none"/></svg>
<div class="t" style="top:1.1px;font:bold 20px/28px 'Liberation Sans', sans-serif;color:#f2f2f2;-webkit-text-stroke:0.6px #f2f2f2;left:184.0px;width:800px;text-align:center;transform-origin:50% 50%;transform:scaleX(0.767);"><span>Artifact Project Editor - The Artifact Project</span></div>
<span class="t" style="top:38.7px;font:normal 12px/17px 'Liberation Sans', sans-serif;color:#c4c4c4;left:5.1px;transform-origin:0 50%;transform:scaleX(0.931);">File</span>
<span class="t" style="top:38.7px;font:normal 12px/17px 'Liberation Sans', sans-serif;color:#c4c4c4;left:35.0px;transform-origin:0 50%;transform:scaleX(0.965);">View</span>
<span class="t" style="top:38.7px;font:normal 12px/17px 'Liberation Sans', sans-serif;color:#c4c4c4;left:70.2px;transform-origin:0 50%;">Debugging</span>
<span class="t" style="top:38.7px;font:normal 12px/17px 'Liberation Sans', sans-serif;color:#c4c4c4;left:140.4px;transform-origin:0 50%;transform:scaleX(0.936);">Help</span>
<span class="t" style="top:39.2px;font:normal 12px/17px 'Liberation Sans', sans-serif;color:#d0d0d0;left:910.9px;transform-origin:0 50%;transform:scaleX(0.977);">single_block</span>
<span class="t" style="top:62.1px;font:bold 12px/17px 'Liberation Mono', monospace;color:#5a5a5a;left:7.2px;transform-origin:0 50%;transform:scaleX(0.966);">Search for Content</span>
<span class="t" style="top:86.1px;font:normal 12px/17px 'Liberation Sans', sans-serif;color:#c8c8c8;left:20.0px;transform-origin:0 50%;transform:scaleX(0.934);">Blocks</span>
<span class="t" style="top:102.3px;font:normal 12px/17px 'Liberation Sans', sans-serif;color:#c8c8c8;left:20.0px;transform-origin:0 50%;transform:scaleX(1.009);">World</span>
<span class="t" style="top:118.5px;font:normal 12px/17px 'Liberation Sans', sans-serif;color:#c8c8c8;left:36.0px;transform-origin:0 50%;transform:scaleX(0.915);">Block Sets</span>
<span class="t" style="top:134.7px;font:normal 12px/17px 'Liberation Sans', sans-serif;color:#c8c8c8;left:36.0px;transform-origin:0 50%;transform:scaleX(0.961);">Map Generators</span>
<span class="t" style="top:151.0px;font:normal 12px/17px 'Liberation Sans', sans-serif;color:#c8c8c8;left:36.0px;transform-origin:0 50%;transform:scaleX(0.945);">Noise Generators</span>
<span class="t" style="top:167.2px;font:normal 12px/17px 'Liberation Sans', sans-serif;color:#c8c8c8;left:20.0px;transform-origin:0 50%;transform:scaleX(0.907);">Resources</span>
<span class="t" style="top:183.4px;font:normal 12px/17px 'Liberation Sans', sans-serif;color:#c8c8c8;left:36.0px;transform-origin:0 50%;transform:scaleX(0.987);">Audio</span>
<span class="t" style="top:199.6px;font:normal 12px/17px 'Liberation Sans', sans-serif;color:#c8c8c8;left:36.0px;transform-origin:0 50%;transform:scaleX(0.926);">Meshes</span>
<span class="t" style="top:215.8px;font:normal 12px/17px 'Liberation Sans', sans-serif;color:#c8c8c8;left:52.3px;transform-origin:0 50%;transform:scaleX(1.038);">low</span>
<span class="t" style="top:232.0px;font:normal 12px/17px 'Liberation Sans', sans-serif;color:#4ea3ee;left:67.8px;transform-origin:0 50%;transform:scaleX(0.990);">low.mesh.solid_box</span>
<span class="t" style="top:248.2px;font:normal 12px/17px 'Liberation Sans', sans-serif;color:#4ea3ee;left:67.8px;transform-origin:0 50%;transform:scaleX(1.007);">low.mesh.solid_box_top_bottom</span>
<span class="t" style="top:264.5px;font:normal 12px/17px 'Liberation Sans', sans-serif;color:#4ea3ee;left:67.8px;transform-origin:0 50%;transform:scaleX(0.977);">low.mesh.cross.plant</span>
<span class="t" style="top:280.7px;font:normal 12px/17px 'Liberation Sans', sans-serif;color:#c8c8c8;left:52.3px;transform-origin:0 50%;transform:scaleX(0.920);">mesh</span>
<span class="t" style="top:296.9px;font:normal 12px/17px 'Liberation Sans', sans-serif;color:#4ea3ee;left:67.8px;transform-origin:0 50%;transform:scaleX(0.954);">mesh.manmade.plates.6</span>
<span class="t" style="top:313.1px;font:normal 12px/17px 'Liberation Sans', sans-serif;color:#4ea3ee;left:67.8px;transform-origin:0 50%;transform:scaleX(0.986);">mesh.ground.soil</span>
<span class="t" style="top:329.3px;font:normal 12px/17px 'Liberation Sans', sans-serif;color:#4ea3ee;left:67.8px;transform-origin:0 50%;transform:scaleX(0.963);">mesh.none</span>
<span class="t" style="top:345.5px;font:normal 12px/17px 'Liberation Sans', sans-serif;color:#4ea3ee;left:67.8px;transform-origin:0 50%;transform:scaleX(0.958);">mesh.manmade.plates.slope.3</span>
<span class="t" style="top:361.7px;font:normal 12px/17px 'Liberation Sans', sans-serif;color:#4ea3ee;left:67.8px;transform-origin:0 50%;transform:scaleX(0.954);">mesh.plant.grass</span>
<span class="t" style="top:378.0px;font:normal 12px/17px 'Liberation Sans', sans-serif;color:#4ea3ee;left:67.8px;transform-origin:0 50%;transform:scaleX(0.957);">mesh.test</span>
<span class="t" style="top:394.2px;font:normal 12px/17px 'Liberation Sans', sans-serif;color:#4ea3ee;left:67.8px;transform-origin:0 50%;transform:scaleX(0.961);">mesh.manmade.scaffold</span>
<span class="t" style="top:410.4px;font:normal 12px/17px 'Liberation Sans', sans-serif;color:#4ea3ee;left:67.8px;transform-origin:0 50%;transform:scaleX(0.961);">mesh.manmade.frame</span>
<span class="t" style="top:426.6px;font:normal 12px/17px 'Liberation Sans', sans-serif;color:#4ea3ee;left:67.8px;transform-origin:0 50%;transform:scaleX(0.964);">mesh.manmade.armor.3</span>
<span class="t" style="top:442.8px;font:normal 12px/17px 'Liberation Sans', sans-serif;color:#4ea3ee;left:67.8px;transform-origin:0 50%;transform:scaleX(0.954);">mesh.manmade.plates.3</span>
<span class="t" style="top:459.0px;font:normal 12px/17px 'Liberation Sans', sans-serif;color:#4ea3ee;left:67.8px;transform-origin:0 50%;transform:scaleX(0.966);">mesh.manmade.frame_inner</span>
<span class="t" style="top:475.2px;font:normal 12px/17px 'Liberation Sans', sans-serif;color:#4ea3ee;left:67.8px;transform-origin:0 50%;transform:scaleX(0.958);">mesh.manmade.plates.slope.6</span>
<span class="t" style="top:491.4px;font:normal 12px/17px 'Liberation Sans', sans-serif;color:#c8c8c8;left:52.3px;transform-origin:0 50%;transform:scaleX(0.912);">misc</span>
<span class="t" style="top:507.7px;font:normal 12px/17px 'Liberation Sans', sans-serif;color:#4ea3ee;left:67.8px;transform-origin:0 50%;transform:scaleX(0.954);">misc.pebble</span>
<span class="t" style="top:523.9px;font:normal 12px/17px 'Liberation Sans', sans-serif;color:#4ea3ee;left:67.8px;transform-origin:0 50%;transform:scaleX(0.979);">misc.plates.bottom</span>
<span class="t" style="top:540.1px;font:normal 12px/17px 'Liberation Sans', sans-serif;color:#4ea3ee;left:67.8px;transform-origin:0 50%;transform:scaleX(0.947);">misc.plates.slope</span>
<span class="t" style="top:556.3px;font:normal 12px/17px 'Liberation Sans', sans-serif;color:#4ea3ee;left:67.8px;transform-origin:0 50%;transform:scaleX(0.951);">misc.roots</span>
<span class="t" style="top:572.5px;font:normal 12px/17px 'Liberation Sans', sans-serif;color:#4ea3ee;left:67.8px;transform-origin:0 50%;transform:scaleX(0.943);">misc.plates.slope.OLD</span>
<span class="t" style="top:588.7px;font:normal 12px/17px 'Liberation Sans', sans-serif;color:#4ea3ee;left:67.8px;transform-origin:0 50%;transform:scaleX(0.964);">misc.plates.slope.bottom_back.OLD</span>
<span class="t" style="top:604.9px;font:normal 12px/17px 'Liberation Sans', sans-serif;color:#4ea3ee;left:67.8px;transform-origin:0 50%;transform:scaleX(0.963);">misc.plates.left</span>
<span class="t" style="top:621.2px;font:normal 12px/17px 'Liberation Sans', sans-serif;color:#4ea3ee;left:67.8px;transform-origin:0 50%;transform:scaleX(0.936);">misc.plates</span>
<span class="t" style="top:637.4px;font:normal 12px/17px 'Liberation Sans', sans-serif;color:#4ea3ee;left:67.8px;transform-origin:0 50%;transform:scaleX(0.967);">misc.block.tiled.3</span>
<span class="t" style="top:653.6px;font:normal 12px/17px 'Liberation Sans', sans-serif;color:#4ea3ee;left:67.8px;transform-origin:0 50%;transform:scaleX(0.979);">misc.plates.front</span>
<span class="t" style="top:669.8px;font:normal 12px/17px 'Liberation Sans', sans-serif;color:#4ea3ee;left:67.8px;transform-origin:0 50%;transform:scaleX(0.977);">misc.plates.right</span>
<span class="t" style="top:686.0px;font:normal 12px/17px 'Liberation Sans', sans-serif;color:#4ea3ee;left:67.8px;transform-origin:0 50%;transform:scaleX(0.936);">misc.plates.back</span>
<span class="t" style="top:702.2px;font:normal 12px/17px 'Liberation Sans', sans-serif;color:#4ea3ee;left:67.8px;transform-origin:0 50%;transform:scaleX(0.954);">misc.plates.top</span>
<span class="t" style="top:718.4px;font:normal 12px/17px 'Liberation Sans', sans-serif;color:#4ea3ee;left:67.8px;transform-origin:0 50%;transform:scaleX(0.967);">misc.plates.slope.bottom_back</span>
<span class="t" style="top:734.7px;font:normal 12px/17px 'Liberation Sans', sans-serif;color:#c8c8c8;left:52.3px;transform-origin:0 50%;transform:scaleX(1.021);">primitive</span>
<span class="t" style="top:750.9px;font:normal 12px/17px 'Liberation Sans', sans-serif;color:#4ea3ee;left:67.8px;transform-origin:0 50%;transform:scaleX(0.993);">primitive.triangle.inset.4</span>
<span class="t" style="top:767.1px;font:normal 12px/17px 'Liberation Sans', sans-serif;color:#c8c8c8;left:52.3px;transform-origin:0 50%;transform:scaleX(0.967);">test</span>
<span class="t" style="top:783.3px;font:normal 12px/17px 'Liberation Sans', sans-serif;color:#4ea3ee;left:67.8px;transform-origin:0 50%;transform:scaleX(0.937);">test.mesh.sides</span>
<span class="t" style="top:799.8px;font:normal 12px/17px 'Liberation Sans', sans-serif;color:#a6a6a6;left:22.0px;transform-origin:0 50%;transform:scaleX(0.987);">Done loading "The Artifact Project"</span>
<span class="t" style="top:799.6px;font:normal 12px/17px 'Liberation Sans', sans-serif;color:#acacac;left:1093.0px;transform-origin:0 50%;transform:scaleX(0.959);">Current View:</span>
<div class="t" style="top:61.5px;font:normal 16.5px/23px 'Liberation Sans', sans-serif;color:#9a9a9a;left:311.5px;width:800px;text-align:center;transform-origin:50% 50%;transform:scaleX(0.994);"><span>Mesh Definition Editor</span></div>
<span class="t" style="top:101.6px;font:normal 12px/17px 'Liberation Sans', sans-serif;color:#e8e8e8;left:273.4px;transform-origin:0 50%;transform:scaleX(0.990);">low.mesh.solid_box</span>
<span class="t" style="top:147.6px;font:normal 12px/17px 'Liberation Sans', sans-serif;color:#a8a8a8;right:534.5px;transform-origin:100% 50%;">Context</span>
<span class="t" style="top:168.6px;font:normal 12px/17px 'Liberation Sans', sans-serif;color:#a8a8a8;right:534.5px;transform-origin:100% 50%;transform:scaleX(0.934);">Errors</span>
<span class="t" style="top:165.8px;font:normal 12px/17px 'Liberation Sans', sans-serif;color:#178417;left:639.2px;transform-origin:0 50%;transform:scaleX(0.970);">No Errors found</span>
<span class="t" style="top:188.7px;font:normal 12px/17px 'Liberation Sans', sans-serif;color:#a8a8a8;right:534.5px;transform-origin:100% 50%;transform:scaleX(0.953);">Name</span>
<span class="t" style="top:188.8px;font:bold 12px/17px 'Liberation Mono', monospace;color:#dcdcdc;left:643.2px;transform-origin:0 50%;transform:scaleX(0.970);">low.mesh.solid_box</span>
<span class="t" style="top:209.7px;font:normal 12px/17px 'Liberation Sans', sans-serif;color:#a8a8a8;right:534.5px;transform-origin:100% 50%;transform:scaleX(0.931);">Surface</span>
<span class="t" style="top:211.0px;font:normal 12px/17px 'Liberation Sans', sans-serif;color:#ececec;left:657.3px;transform-origin:0 50%;transform:scaleX(0.958);">sides, 6 Items</span>
<span class="t" style="top:232.8px;font:normal 12px/17px 'Liberation Sans', sans-serif;color:#a8a8a8;left:665.2px;transform-origin:0 50%;transform:scaleX(0.966);">name</span>
<span class="t" style="top:232.6px;font:normal 12px/17px 'Liberation Sans', sans-serif;color:#d4d4d4;left:705.0px;transform-origin:0 50%;transform:scaleX(0.928);">sides</span>
<span class="t" style="top:260.8px;font:normal 12px/17px 'Liberation Sans', sans-serif;color:#a8a8a8;left:657.6px;transform-origin:0 50%;transform:scaleX(0.987);">0</span>
<span class="t" style="top:260.6px;font:normal 12px/17px 'Liberation Sans', sans-serif;color:#ececec;left:713.6px;transform-origin:0 50%;transform:scaleX(1.019);">If</span>
<span class="t" style="top:260.6px;font:normal 12px/17px 'Liberation Sans', sans-serif;color:#ececec;left:722.8px;transform-origin:0 50%;transform:scaleX(0.976);">space_front</span>
<span class="t" style="top:259.9px;font:bold 12.5px/18px 'Liberation Sans', sans-serif;color:#f4f4f4;left:789.4px;transform-origin:0 50%;transform:scaleX(0.864);">?</span>
<span class="t" style="top:281.6px;font:normal 12px/17px 'Liberation Sans', sans-serif;color:#a8a8a8;left:657.6px;transform-origin:0 50%;transform:scaleX(0.987);">1</span>
<span class="t" style="top:281.4px;font:normal 12px/17px 'Liberation Sans', sans-serif;color:#ececec;left:713.6px;transform-origin:0 50%;transform:scaleX(1.019);">If</span>
<span class="t" style="top:281.4px;font:normal 12px/17px 'Liberation Sans', sans-serif;color:#ececec;left:722.8px;transform-origin:0 50%;transform:scaleX(0.915);">space_back</span>
<span class="t" style="top:280.8px;font:bold 12.5px/18px 'Liberation Sans', sans-serif;color:#f4f4f4;left:787.4px;transform-origin:0 50%;transform:scaleX(0.864);">?</span>
<span class="t" style="top:302.5px;font:normal 12px/17px 'Liberation Sans', sans-serif;color:#a8a8a8;left:657.6px;transform-origin:0 50%;transform:scaleX(0.987);">2</span>
<span class="t" style="top:302.3px;font:normal 12px/17px 'Liberation Sans', sans-serif;color:#ececec;left:713.6px;transform-origin:0 50%;transform:scaleX(1.019);">If</span>
<span class="t" style="top:302.3px;font:normal 12px/17px 'Liberation Sans', sans-serif;color:#ececec;left:722.8px;transform-origin:0 50%;transform:scaleX(0.951);">space_top</span>
<span class="t" style="top:301.6px;font:bold 12.5px/18px 'Liberation Sans', sans-serif;color:#f4f4f4;left:781.0px;transform-origin:0 50%;transform:scaleX(0.864);">?</span>
<span class="t" style="top:323.3px;font:normal 12px/17px 'Liberation Sans', sans-serif;color:#a8a8a8;left:657.6px;transform-origin:0 50%;transform:scaleX(0.987);">3</span>
<span class="t" style="top:323.1px;font:normal 12px/17px 'Liberation Sans', sans-serif;color:#ececec;left:713.6px;transform-origin:0 50%;transform:scaleX(1.019);">If</span>
<span class="t" style="top:323.1px;font:normal 12px/17px 'Liberation Sans', sans-serif;color:#ececec;left:722.8px;transform-origin:0 50%;transform:scaleX(0.982);">space_bottom</span>
<span class="t" style="top:322.4px;font:bold 12.5px/18px 'Liberation Sans', sans-serif;color:#f4f4f4;left:802.0px;transform-origin:0 50%;transform:scaleX(0.864);">?</span>
<span class="t" style="top:344.2px;font:normal 12px/17px 'Liberation Sans', sans-serif;color:#a8a8a8;left:657.6px;transform-origin:0 50%;transform:scaleX(0.987);">4</span>
<span class="t" style="top:344.0px;font:normal 12px/17px 'Liberation Sans', sans-serif;color:#ececec;left:713.6px;transform-origin:0 50%;transform:scaleX(1.019);">If</span>
<span class="t" style="top:344.0px;font:normal 12px/17px 'Liberation Sans', sans-serif;color:#ececec;left:722.8px;transform-origin:0 50%;transform:scaleX(0.954);">space_left</span>
<span class="t" style="top:343.3px;font:bold 12.5px/18px 'Liberation Sans', sans-serif;color:#f4f4f4;left:780.4px;transform-origin:0 50%;transform:scaleX(0.864);">?</span>
<span class="t" style="top:365.0px;font:normal 12px/17px 'Liberation Sans', sans-serif;color:#a8a8a8;left:657.6px;transform-origin:0 50%;transform:scaleX(0.987);">5</span>
<span class="t" style="top:364.8px;font:normal 12px/17px 'Liberation Sans', sans-serif;color:#ececec;left:713.6px;transform-origin:0 50%;transform:scaleX(1.019);">If</span>
<span class="t" style="top:364.8px;font:normal 12px/17px 'Liberation Sans', sans-serif;color:#ececec;left:722.8px;transform-origin:0 50%;transform:scaleX(0.973);">space_right</span>
<span class="t" style="top:364.1px;font:bold 12.5px/18px 'Liberation Sans', sans-serif;color:#f4f4f4;left:788.4px;transform-origin:0 50%;transform:scaleX(0.864);">?</span>
<span class="t" style="top:385.9px;font:normal 12px/17px 'Liberation Sans', sans-serif;color:#a8a8a8;left:723.0px;transform-origin:0 50%;transform:scaleX(0.968);">cond</span>
<span class="t" style="top:385.8px;font:normal 12px/17px 'Liberation Sans', sans-serif;color:#d4d4d4;left:759.8px;transform-origin:0 50%;transform:scaleX(0.983);">space_right</span>
<span class="t" style="top:413.0px;font:bold 12px/17px 'Liberation Mono', monospace;color:#8a8a8a;left:720.6px;transform-origin:0 50%;transform:scaleX(0.937);">then</span>
<span class="t" style="top:413.4px;font:normal 12px/17px 'Liberation Sans', sans-serif;color:#ececec;left:777.9px;transform-origin:0 50%;transform:scaleX(0.935);">Static Synced Face facing Right</span>
<span class="t" style="top:435.6px;font:normal 12px/17px 'Liberation Sans', sans-serif;color:#a8a8a8;right:326.0px;transform-origin:100% 50%;transform:scaleX(0.957);">a</span>
<div class="t" style="top:435.6px;font:normal 12px/17px 'Liberation Sans', sans-serif;color:#cfcfcf;left:496.4px;width:800px;text-align:center;transform-origin:50% 50%;transform:scaleX(0.988);"><span>x: 24.00</span></div>
<div class="t" style="top:435.6px;font:normal 12px/17px 'Liberation Sans', sans-serif;color:#cfcfcf;left:601.0px;width:800px;text-align:center;transform-origin:50% 50%;transform:scaleX(0.965);"><span>y: 12.00</span></div>
<div class="t" style="top:435.6px;font:normal 12px/17px 'Liberation Sans', sans-serif;color:#cfcfcf;left:705.1px;width:800px;text-align:center;transform-origin:50% 50%;transform:scaleX(0.965);"><span>z: 24.00</span></div>
<span class="t" style="top:456.1px;font:normal 12px/17px 'Liberation Sans', sans-serif;color:#a8a8a8;right:326.0px;transform-origin:100% 50%;transform:scaleX(0.957);">b</span>
<div class="t" style="top:456.1px;font:normal 12px/17px 'Liberation Sans', sans-serif;color:#cfcfcf;left:496.4px;width:800px;text-align:center;transform-origin:50% 50%;transform:scaleX(0.988);"><span>x: 24.00</span></div>
<div class="t" style="top:456.1px;font:normal 12px/17px 'Liberation Sans', sans-serif;color:#cfcfcf;left:601.0px;width:800px;text-align:center;transform-origin:50% 50%;transform:scaleX(0.965);"><span>y: 12.00</span></div>
<div class="t" style="top:456.1px;font:normal 12px/17px 'Liberation Sans', sans-serif;color:#cfcfcf;left:705.1px;width:800px;text-align:center;transform-origin:50% 50%;transform:scaleX(0.944);"><span>z: 0.00</span></div>
<span class="t" style="top:476.7px;font:normal 12px/17px 'Liberation Sans', sans-serif;color:#a8a8a8;right:326.0px;transform-origin:100% 50%;transform:scaleX(1.067);">c</span>
<div class="t" style="top:476.7px;font:normal 12px/17px 'Liberation Sans', sans-serif;color:#cfcfcf;left:496.4px;width:800px;text-align:center;transform-origin:50% 50%;transform:scaleX(0.985);"><span>x: 0.00</span></div>
<div class="t" style="top:476.7px;font:normal 12px/17px 'Liberation Sans', sans-serif;color:#cfcfcf;left:601.0px;width:800px;text-align:center;transform-origin:50% 50%;transform:scaleX(0.965);"><span>y: 12.00</span></div>
<div class="t" style="top:476.7px;font:normal 12px/17px 'Liberation Sans', sans-serif;color:#cfcfcf;left:705.1px;width:800px;text-align:center;transform-origin:50% 50%;transform:scaleX(0.944);"><span>z: 0.00</span></div>
<span class="t" style="top:497.2px;font:normal 12px/17px 'Liberation Sans', sans-serif;color:#a8a8a8;right:326.0px;transform-origin:100% 50%;transform:scaleX(0.957);">d</span>
<div class="t" style="top:497.2px;font:normal 12px/17px 'Liberation Sans', sans-serif;color:#cfcfcf;left:496.4px;width:800px;text-align:center;transform-origin:50% 50%;transform:scaleX(0.985);"><span>x: 0.00</span></div>
<div class="t" style="top:497.2px;font:normal 12px/17px 'Liberation Sans', sans-serif;color:#cfcfcf;left:601.0px;width:800px;text-align:center;transform-origin:50% 50%;transform:scaleX(0.965);"><span>y: 12.00</span></div>
<div class="t" style="top:497.2px;font:normal 12px/17px 'Liberation Sans', sans-serif;color:#cfcfcf;left:705.1px;width:800px;text-align:center;transform-origin:50% 50%;transform:scaleX(0.965);"><span>z: 24.00</span></div>
<span class="t" style="top:517.0px;font:normal 12px/17px 'Liberation Sans', sans-serif;color:#a8a8a8;right:326.0px;transform-origin:100% 50%;transform:scaleX(0.955);">wave_a</span>
<div class="t" style="top:517.8px;font:normal 12px/17px 'Liberation Sans', sans-serif;color:#cfcfcf;left:729.0px;width:800px;text-align:center;transform-origin:50% 50%;transform:scaleX(1.012);"><span>0.000</span></div>
<span class="t" style="top:537.5px;font:normal 12px/17px 'Liberation Sans', sans-serif;color:#a8a8a8;right:326.0px;transform-origin:100% 50%;transform:scaleX(0.955);">wave_b</span>
<div class="t" style="top:538.3px;font:normal 12px/17px 'Liberation Sans', sans-serif;color:#cfcfcf;left:729.0px;width:800px;text-align:center;transform-origin:50% 50%;transform:scaleX(1.012);"><span>0.000</span></div>
<span class="t" style="top:558.1px;font:normal 12px/17px 'Liberation Sans', sans-serif;color:#a8a8a8;right:326.0px;transform-origin:100% 50%;transform:scaleX(0.971);">wave_c</span>
<div class="t" style="top:558.9px;font:normal 12px/17px 'Liberation Sans', sans-serif;color:#cfcfcf;left:729.0px;width:800px;text-align:center;transform-origin:50% 50%;transform:scaleX(1.012);"><span>0.000</span></div>
<span class="t" style="top:578.6px;font:normal 12px/17px 'Liberation Sans', sans-serif;color:#a8a8a8;right:326.0px;transform-origin:100% 50%;transform:scaleX(0.955);">wave_d</span>
<div class="t" style="top:579.4px;font:normal 12px/17px 'Liberation Sans', sans-serif;color:#cfcfcf;left:729.0px;width:800px;text-align:center;transform-origin:50% 50%;transform:scaleX(1.012);"><span>0.000</span></div>
<span class="t" style="top:599.9px;font:normal 12px/17px 'Liberation Sans', sans-serif;color:#a8a8a8;right:326.0px;transform-origin:100% 50%;">facing</span>
<span class="t" style="top:600.6px;font:normal 12px/17px 'Liberation Sans', sans-serif;color:#d8d8d8;left:852.2px;transform-origin:0 50%;">Right</span>
<span class="t" style="top:621.4px;font:normal 12px/17px 'Liberation Sans', sans-serif;color:#a8a8a8;right:326.0px;transform-origin:100% 50%;transform:scaleX(1.025);">uv</span>
<div class="t" style="top:621.6px;font:normal 12px/17px 'Liberation Sans', sans-serif;color:#cfcfcf;left:523.1px;width:800px;text-align:center;transform-origin:50% 50%;transform:scaleX(0.982);"><span>x: 0</span></div>
<div class="t" style="top:621.6px;font:normal 12px/17px 'Liberation Sans', sans-serif;color:#cfcfcf;left:680.1px;width:800px;text-align:center;transform-origin:50% 50%;transform:scaleX(0.982);"><span>y: 0</span></div>
<span class="t" style="top:642.4px;font:normal 12px/17px 'Liberation Sans', sans-serif;color:#a8a8a8;right:326.0px;transform-origin:100% 50%;">overlay</span>
<div class="t" style="top:642.6px;font:normal 12px/17px 'Liberation Sans', sans-serif;color:#cfcfcf;left:523.1px;width:800px;text-align:center;transform-origin:50% 50%;transform:scaleX(0.982);"><span>x: 0</span></div>
<div class="t" style="top:642.6px;font:normal 12px/17px 'Liberation Sans', sans-serif;color:#cfcfcf;left:680.1px;width:800px;text-align:center;transform-origin:50% 50%;transform:scaleX(0.982);"><span>y: 0</span></div>
<span class="t" style="top:663.0px;font:normal 12px/17px 'Liberation Sans', sans-serif;color:#a8a8a8;right:326.0px;transform-origin:100% 50%;transform:scaleX(0.993);">dbl_sided</span>
<span class="t" style="top:663.2px;font:normal 12px/17px 'Liberation Sans', sans-serif;color:#d8d8d8;left:872.2px;transform-origin:0 50%;transform:scaleX(0.941);">True</span>
<span class="t" style="top:663.2px;font:normal 12px/17px 'Liberation Sans', sans-serif;color:#d8d8d8;left:919.3px;transform-origin:0 50%;transform:scaleX(0.866);">False</span>
<span class="t" style="top:682.2px;font:bold 12px/17px 'Liberation Mono', monospace;color:#8a8a8a;left:720.6px;transform-origin:0 50%;transform:scaleX(0.937);">else</span>
<span class="t" style="top:682.2px;font:normal 12px/17px 'Liberation Sans', sans-serif;color:#c0c0c0;left:762.5px;transform-origin:0 50%;transform:scaleX(0.921);">No Surface Element.</span>
</div>
</body></html>
